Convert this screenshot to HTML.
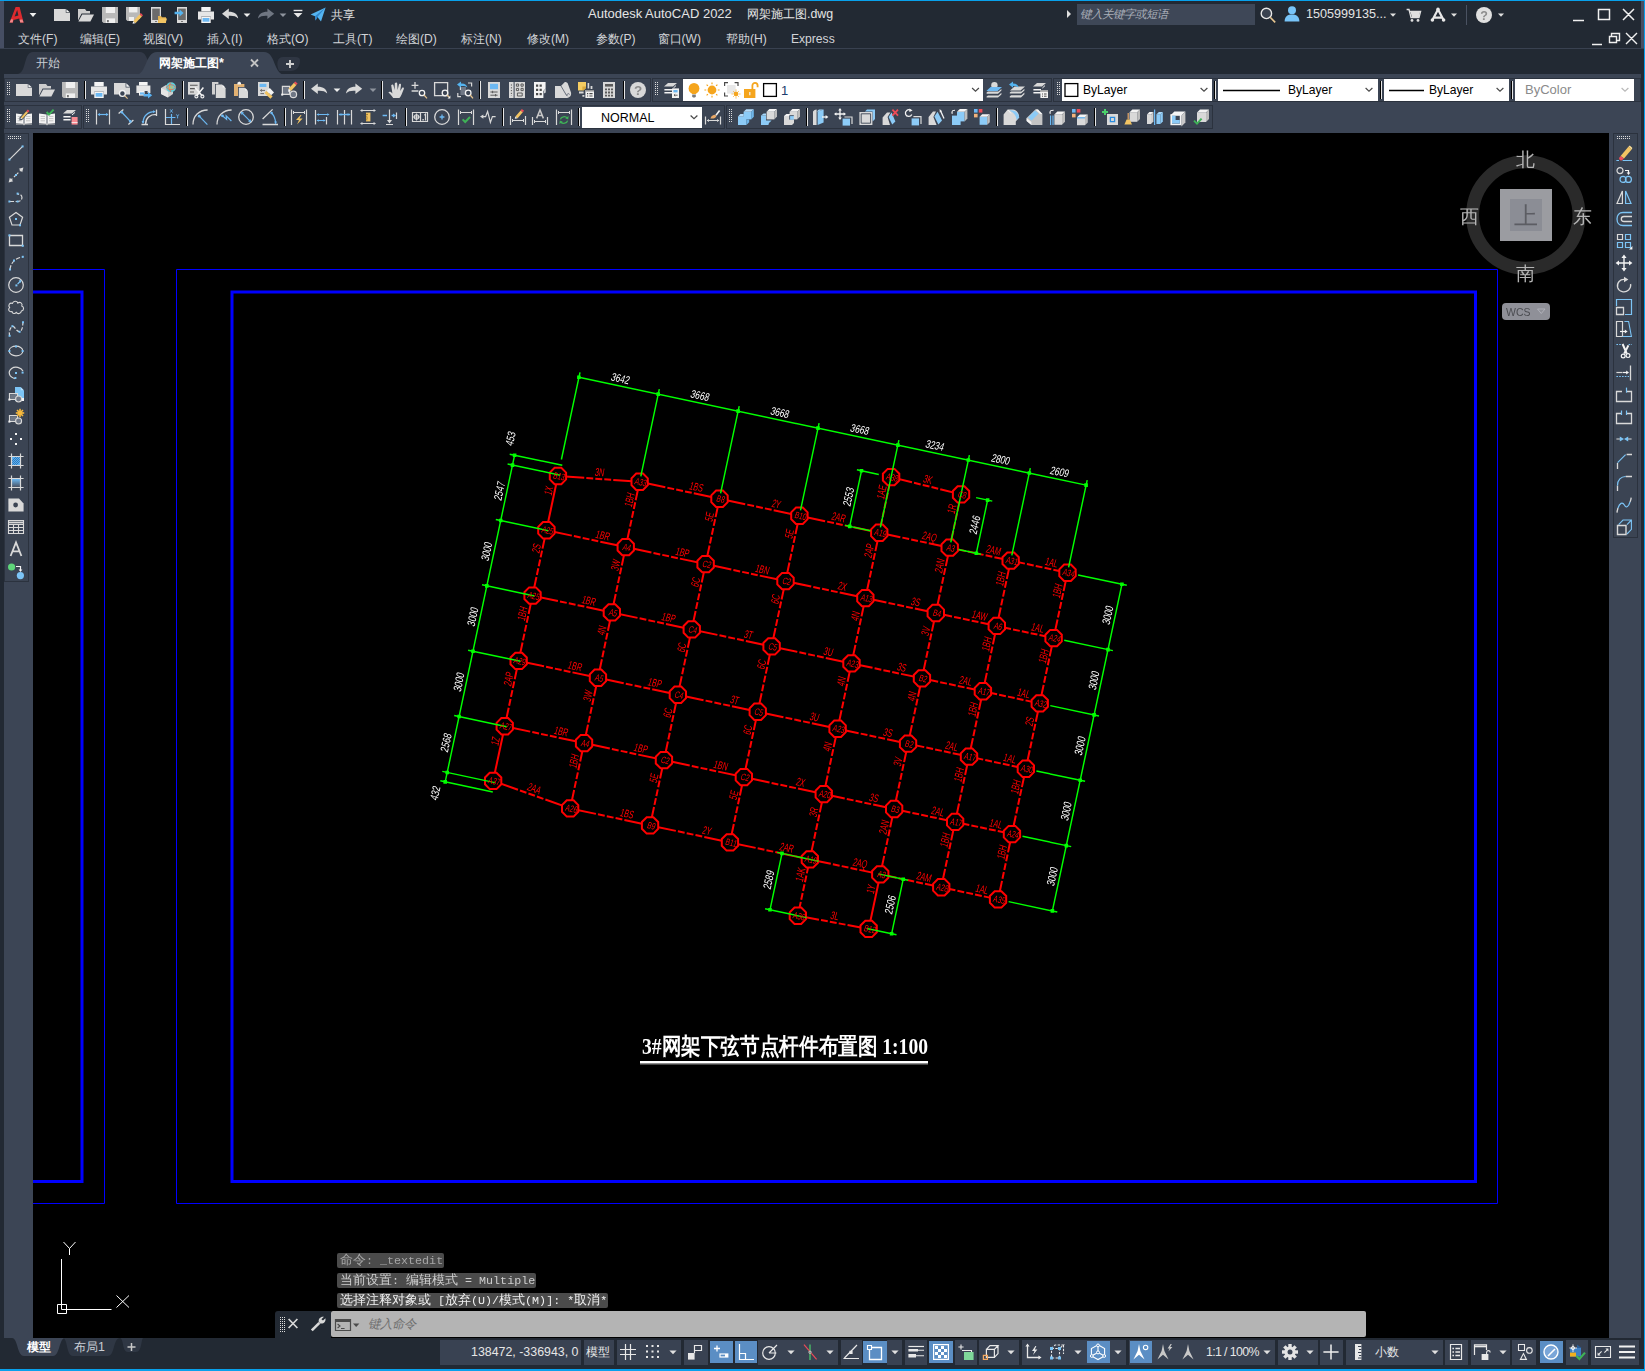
<!DOCTYPE html>
<html><head><meta charset="utf-8"><title>Autodesk AutoCAD 2022</title><style>
*{box-sizing:border-box}
html,body{margin:0;padding:0}
body{width:1645px;height:1371px;overflow:hidden;background:#222933;font-family:"Liberation Sans",sans-serif;font-size:12px;color:#d6d6d6;position:relative}
.a{position:absolute}
.t{position:absolute;white-space:nowrap;line-height:16px}
.pn{position:absolute;background:#3b4453;border:1px solid #2b323e}
.dd{position:absolute;background:#fff;color:#000;font-size:13px;line-height:21px;white-space:nowrap}
.sc{position:absolute;top:1340px;height:25px;background:#394252}
.on{position:absolute;top:1341px;height:22px;background:#5b8ec4}
.ch{position:absolute;left:337px;height:15px;background:#4b4b4b;border-radius:2px;font-family:"Liberation Mono",monospace;font-size:11.7px;line-height:15px;overflow:hidden;padding-left:3px;white-space:pre}
svg{position:absolute;overflow:visible}
</style></head><body>
<div class="a" style="left:0;top:0;width:1645px;height:1px;background:#08a1ec"></div>
<div class="a" style="left:0;top:1px;width:4px;height:47px;background:#464e63"></div>
<div class="a" style="left:1641px;top:1px;width:3px;height:47px;background:#464e63"></div>
<div class="a" style="left:0;top:48px;width:1645px;height:1px;background:#394150"></div>
<div class="a" style="left:4px;top:74px;width:1637px;height:59px;background:#3c4555"></div>
<div class="a" style="left:4px;top:133px;width:29px;height:1205px;background:#3c4555"></div>
<div class="a" style="left:1609px;top:133px;width:32px;height:1205px;background:#3c4555"></div>
<div class="a" style="left:1644px;top:0;width:1px;height:1371px;background:#08a1ec"></div>
<div class="a" style="left:0;top:1369px;width:1645px;height:2px;background:#08a1ec"></div>
<div class="a" style="left:33px;top:133px;width:1576px;height:1205px;background:#000"></div>
<div class="t" style="left:588px;top:6px;font-size:13px;color:#e4e4e4">Autodesk AutoCAD 2022</div>
<div class="t" style="left:747px;top:6px;font-size:12.4px;color:#e4e4e4">网架施工图.dwg</div>
<div class="t" style="left:331px;top:7px;font-size:12px;color:#e0e0e0">共享</div>
<div class="a" style="left:1077px;top:4px;width:178px;height:21px;background:#3e4757"></div>
<div class="t" style="left:1080px;top:6px;font-size:11.5px;font-style:italic;color:#a9aeb8;letter-spacing:-1px">键入关键字或短语</div>
<div class="t" style="left:1306px;top:6px;font-size:12.6px;color:#e4e4e4">1505999135...</div>
<div class="t" style="left:18px;top:31px;font-size:12.1px;color:#d2d4d8">文件(F)</div>
<div class="t" style="left:80px;top:31px;font-size:12.1px;color:#d2d4d8">编辑(E)</div>
<div class="t" style="left:143px;top:31px;font-size:12.1px;color:#d2d4d8">视图(V)</div>
<div class="t" style="left:207px;top:31px;font-size:12.1px;color:#d2d4d8">插入(I)</div>
<div class="t" style="left:267px;top:31px;font-size:12.1px;color:#d2d4d8">格式(O)</div>
<div class="t" style="left:333px;top:31px;font-size:12.1px;color:#d2d4d8">工具(T)</div>
<div class="t" style="left:396px;top:31px;font-size:12.1px;color:#d2d4d8">绘图(D)</div>
<div class="t" style="left:461px;top:31px;font-size:12.1px;color:#d2d4d8">标注(N)</div>
<div class="t" style="left:527px;top:31px;font-size:12.1px;color:#d2d4d8">修改(M)</div>
<div class="t" style="left:595.5px;top:31px;font-size:12.1px;color:#d2d4d8">参数(P)</div>
<div class="t" style="left:657.5px;top:31px;font-size:12.1px;color:#d2d4d8">窗口(W)</div>
<div class="t" style="left:726px;top:31px;font-size:12.1px;color:#d2d4d8">帮助(H)</div>
<div class="t" style="left:791px;top:31px;font-size:12.1px;color:#d2d4d8">Express</div>
<svg style="left:0;top:49px" width="320" height="26" viewBox="0 49 320 26"><path d="M17 74 C27 74 23 52 33 52 H140 C150 52 147 74 158 74Z" fill="#323947"/><path d="M279 71 C276 64 277 57 283 57 H294 C299 57 300 58 300 61 C300 67 296 71 291 71Z" fill="#2f3643"/><path d="M136 75 C147 74 145 52 157 52 H264 C276 52 273 74 285 75Z" fill="#3c4555"/><path d="M254.5 63 m-3.5 -3.5 l7 7 m0 -7 l-7 7" stroke="#c4c4c4" stroke-width="1.9" fill="none"/><path d="M286 64 h8 M290 60 v8" stroke="#d0d0d0" stroke-width="1.9" fill="none"/></svg>
<div class="t" style="left:36px;top:55px;font-size:12.4px;color:#c9cdd4">开始</div>
<div class="t" style="left:159px;top:55px;font-size:12.4px;font-weight:bold;color:#fff">网架施工图*</div>
<div class="pn" style="left:4px;top:78px;width:647px;height:24px"></div>
<div class="pn" style="left:652px;top:78px;width:400px;height:24px"></div>
<div class="pn" style="left:1053px;top:78px;width:588px;height:24px"></div>
<div class="pn" style="left:4px;top:105px;width:78px;height:24px"></div>
<div class="pn" style="left:83px;top:105px;width:642px;height:24px"></div>
<div class="pn" style="left:726px;top:105px;width:487px;height:24px"></div>
<div class="pn" style="left:4px;top:133px;width:25px;height:449px"></div>
<div class="pn" style="left:1613px;top:133px;width:25px;height:405px"></div>
<svg style="left:0;top:0" width="1645" height="1371"><path d="M7 82h1v1h-1zM9 82h1v1h-1zM7 84h1v1h-1zM9 84h1v1h-1zM7 86h1v1h-1zM9 86h1v1h-1zM7 88h1v1h-1zM9 88h1v1h-1zM7 90h1v1h-1zM9 90h1v1h-1zM7 92h1v1h-1zM9 92h1v1h-1zM7 94h1v1h-1zM9 94h1v1h-1zM655 82h1v1h-1zM657 82h1v1h-1zM655 84h1v1h-1zM657 84h1v1h-1zM655 86h1v1h-1zM657 86h1v1h-1zM655 88h1v1h-1zM657 88h1v1h-1zM655 90h1v1h-1zM657 90h1v1h-1zM655 92h1v1h-1zM657 92h1v1h-1zM655 94h1v1h-1zM657 94h1v1h-1zM1057 82h1v1h-1zM1059 82h1v1h-1zM1057 84h1v1h-1zM1059 84h1v1h-1zM1057 86h1v1h-1zM1059 86h1v1h-1zM1057 88h1v1h-1zM1059 88h1v1h-1zM1057 90h1v1h-1zM1059 90h1v1h-1zM1057 92h1v1h-1zM1059 92h1v1h-1zM1057 94h1v1h-1zM1059 94h1v1h-1zM7 109h1v1h-1zM9 109h1v1h-1zM7 111h1v1h-1zM9 111h1v1h-1zM7 113h1v1h-1zM9 113h1v1h-1zM7 115h1v1h-1zM9 115h1v1h-1zM7 117h1v1h-1zM9 117h1v1h-1zM7 119h1v1h-1zM9 119h1v1h-1zM7 121h1v1h-1zM9 121h1v1h-1zM86 109h1v1h-1zM88 109h1v1h-1zM86 111h1v1h-1zM88 111h1v1h-1zM86 113h1v1h-1zM88 113h1v1h-1zM86 115h1v1h-1zM88 115h1v1h-1zM86 117h1v1h-1zM88 117h1v1h-1zM86 119h1v1h-1zM88 119h1v1h-1zM86 121h1v1h-1zM88 121h1v1h-1zM729 109h1v1h-1zM731 109h1v1h-1zM729 111h1v1h-1zM731 111h1v1h-1zM729 113h1v1h-1zM731 113h1v1h-1zM729 115h1v1h-1zM731 115h1v1h-1zM729 117h1v1h-1zM731 117h1v1h-1zM729 119h1v1h-1zM731 119h1v1h-1zM729 121h1v1h-1zM731 121h1v1h-1zM8 136h1v1h-1zM8 138h1v1h-1zM10 136h1v1h-1zM10 138h1v1h-1zM12 136h1v1h-1zM12 138h1v1h-1zM14 136h1v1h-1zM14 138h1v1h-1zM16 136h1v1h-1zM16 138h1v1h-1zM18 136h1v1h-1zM18 138h1v1h-1zM20 136h1v1h-1zM20 138h1v1h-1zM1617 136h1v1h-1zM1617 138h1v1h-1zM1619 136h1v1h-1zM1619 138h1v1h-1zM1621 136h1v1h-1zM1621 138h1v1h-1zM1623 136h1v1h-1zM1623 138h1v1h-1zM1625 136h1v1h-1zM1625 138h1v1h-1zM1627 136h1v1h-1zM1627 138h1v1h-1zM1629 136h1v1h-1zM1629 138h1v1h-1zM280 1317h1v1h-1zM282 1317h1v1h-1zM284 1317h1v1h-1zM280 1319h1v1h-1zM282 1319h1v1h-1zM284 1319h1v1h-1zM280 1321h1v1h-1zM282 1321h1v1h-1zM284 1321h1v1h-1zM280 1323h1v1h-1zM282 1323h1v1h-1zM284 1323h1v1h-1zM280 1325h1v1h-1zM282 1325h1v1h-1zM284 1325h1v1h-1zM280 1327h1v1h-1zM282 1327h1v1h-1zM284 1327h1v1h-1zM280 1329h1v1h-1zM282 1329h1v1h-1zM284 1329h1v1h-1zM280 1331h1v1h-1zM282 1331h1v1h-1zM284 1331h1v1h-1z" fill="#dcdcdc"/></svg>
<div class="dd" style="left:683px;top:79px;width:300px;height:22px"><span style="position:absolute;left:98px;top:1px;color:#1c3c6e">1</span></div>
<div class="dd" style="left:1062px;top:79px;width:150px;height:22px"><span style="position:absolute;left:21px;top:1px;font-size:12.1px">ByLayer</span></div>
<div class="dd" style="left:1218px;top:79px;width:160px;height:22px"><span style="position:absolute;left:70px;top:1px;font-size:12.1px">ByLayer</span></div>
<div class="dd" style="left:1384px;top:79px;width:125px;height:22px"><span style="position:absolute;left:45px;top:1px;font-size:12.1px">ByLayer</span></div>
<div class="dd" style="left:1515px;top:79px;width:119px;height:22px;color:#8a8a8a"><span style="position:absolute;left:10px;top:0px">ByColor</span></div>
<div class="dd" style="left:582px;top:107px;width:120px;height:21px"><span style="position:absolute;left:19px;top:1px;font-size:12.5px">NORMAL</span></div>
<div class="a" style="left:1214px;top:81px;width:1px;height:18px;background:#000"></div><div class="a" style="left:1215px;top:81px;width:1px;height:18px;background:#e6e6e6"></div>
<div class="a" style="left:1380px;top:81px;width:1px;height:18px;background:#000"></div><div class="a" style="left:1381px;top:81px;width:1px;height:18px;background:#e6e6e6"></div>
<div class="a" style="left:1511px;top:81px;width:1px;height:18px;background:#000"></div><div class="a" style="left:1512px;top:81px;width:1px;height:18px;background:#e6e6e6"></div>
<svg style="left:33px;top:133px;overflow:hidden;will-change:transform" width="1576" height="1205" viewBox="33 133 1576 1205">
<g fill="none" stroke="#0000ff"><path d="M33 269.5 H104.5 V1203.5 H33 M176.5 269.5 H1497.5 V1203.5 H176.5Z" stroke-width="1"/><path d="M33 292 H82 V1181.5 H33 M232 292 H1475.5 V1181.5 H232Z" stroke-width="3"/></g>
<g stroke="#ff0000" stroke-width="2" fill="none">
<path d="M557.9 476 L639.6 481.8" stroke-dasharray="26.4 2.1 6.9 2.1 6.9 2.1 6.9 2.1 26.4"/>
<path d="M639.6 481.8 L719.5 498.7" stroke-dasharray="26.3 2.1 6.9 2.1 6.9 2.1 6.9 2.1 26.3"/>
<path d="M719.5 498.7 L799.4 515.7" stroke-dasharray="26.3 2.1 6.9 2.1 6.9 2.1 6.9 2.1 26.3"/>
<path d="M799.4 515.7 L879.3 532.7" stroke-dasharray="26.3 2.1 6.9 2.1 6.9 2.1 6.9 2.1 26.3"/>
<path d="M879.3 532.7 L949.7 547.7" stroke-dasharray="21.5 2.1 6.9 2.1 6.9 2.1 6.9 2.1 21.5"/>
<path d="M949.7 547.7 L1010.7 560.6" stroke-dasharray="16.6 2.1 6.9 2.1 6.9 2.1 6.9 2.1 16.6"/>
<path d="M1010.7 560.6 L1067.5 572.7" stroke-dasharray="14.5 2.1 6.9 2.1 6.9 2.1 6.9 2.1 14.5"/>
<path d="M546.4 530.2 L625.7 547.1" stroke-dasharray="26 2.1 6.9 2.1 6.9 2.1 6.9 2.1 26"/>
<path d="M625.7 547.1 L705.6 564.1" stroke-dasharray="26.3 2.1 6.9 2.1 6.9 2.1 6.9 2.1 26.3"/>
<path d="M705.6 564.1 L785.5 581.1" stroke-dasharray="26.3 2.1 6.9 2.1 6.9 2.1 6.9 2.1 26.3"/>
<path d="M785.5 581.1 L865.4 598" stroke-dasharray="26.3 2.1 6.9 2.1 6.9 2.1 6.9 2.1 26.3"/>
<path d="M865.4 598 L935.8 613" stroke-dasharray="21.5 2.1 6.9 2.1 6.9 2.1 6.9 2.1 21.5"/>
<path d="M935.8 613 L996.8 626" stroke-dasharray="16.6 2.1 6.9 2.1 6.9 2.1 6.9 2.1 16.6"/>
<path d="M996.8 626 L1053.6 638" stroke-dasharray="14.5 2.1 6.9 2.1 6.9 2.1 6.9 2.1 14.5"/>
<path d="M532.5 595.6 L611.8 612.4" stroke-dasharray="26 2.1 6.9 2.1 6.9 2.1 6.9 2.1 26"/>
<path d="M611.8 612.4 L691.7 629.4" stroke-dasharray="26.3 2.1 6.9 2.1 6.9 2.1 6.9 2.1 26.3"/>
<path d="M691.7 629.4 L771.6 646.4" stroke-dasharray="26.3 2.1 6.9 2.1 6.9 2.1 6.9 2.1 26.3"/>
<path d="M771.6 646.4 L851.5 663.4" stroke-dasharray="26.3 2.1 6.9 2.1 6.9 2.1 6.9 2.1 26.3"/>
<path d="M851.5 663.4 L921.9 678.3" stroke-dasharray="21.5 2.1 6.9 2.1 6.9 2.1 6.9 2.1 21.5"/>
<path d="M921.9 678.3 L982.9 691.3" stroke-dasharray="16.6 2.1 6.9 2.1 6.9 2.1 6.9 2.1 16.6"/>
<path d="M982.9 691.3 L1039.7 703.4" stroke-dasharray="14.5 2.1 6.9 2.1 6.9 2.1 6.9 2.1 14.5"/>
<path d="M518.6 660.9 L598 677.8" stroke-dasharray="26 2.1 6.9 2.1 6.9 2.1 6.9 2.1 26"/>
<path d="M598 677.8 L677.8 694.7" stroke-dasharray="26.3 2.1 6.9 2.1 6.9 2.1 6.9 2.1 26.3"/>
<path d="M677.8 694.7 L757.7 711.7" stroke-dasharray="26.3 2.1 6.9 2.1 6.9 2.1 6.9 2.1 26.3"/>
<path d="M757.7 711.7 L837.6 728.7" stroke-dasharray="26.3 2.1 6.9 2.1 6.9 2.1 6.9 2.1 26.3"/>
<path d="M837.6 728.7 L908 743.7" stroke-dasharray="21.5 2.1 6.9 2.1 6.9 2.1 6.9 2.1 21.5"/>
<path d="M908 743.7 L969 756.6" stroke-dasharray="16.6 2.1 6.9 2.1 6.9 2.1 6.9 2.1 16.6"/>
<path d="M969 756.6 L1025.8 768.7" stroke-dasharray="14.5 2.1 6.9 2.1 6.9 2.1 6.9 2.1 14.5"/>
<path d="M504.8 726.2 L584.1 743.1" stroke-dasharray="26 2.1 6.9 2.1 6.9 2.1 6.9 2.1 26"/>
<path d="M584.1 743.1 L664 760.1" stroke-dasharray="26.3 2.1 6.9 2.1 6.9 2.1 6.9 2.1 26.3"/>
<path d="M664 760.1 L743.8 777.1" stroke-dasharray="26.3 2.1 6.9 2.1 6.9 2.1 6.9 2.1 26.3"/>
<path d="M743.8 777.1 L823.7 794" stroke-dasharray="26.3 2.1 6.9 2.1 6.9 2.1 6.9 2.1 26.3"/>
<path d="M823.7 794 L894.1 809" stroke-dasharray="21.5 2.1 6.9 2.1 6.9 2.1 6.9 2.1 21.5"/>
<path d="M894.1 809 L955.1 822" stroke-dasharray="16.6 2.1 6.9 2.1 6.9 2.1 6.9 2.1 16.6"/>
<path d="M955.1 822 L1011.9 834" stroke-dasharray="14.5 2.1 6.9 2.1 6.9 2.1 6.9 2.1 14.5"/>
<path d="M493.1 780.9 L570.2 808.4" stroke-dasharray="26.4 2.1 6.9 2.1 6.9 2.1 6.9 2.1 26.4"/>
<path d="M570.2 808.4 L650.1 825.4" stroke-dasharray="26.3 2.1 6.9 2.1 6.9 2.1 6.9 2.1 26.3"/>
<path d="M650.1 825.4 L729.9 842.4" stroke-dasharray="26.3 2.1 6.9 2.1 6.9 2.1 6.9 2.1 26.3"/>
<path d="M729.9 842.4 L809.8 859.4" stroke-dasharray="26.3 2.1 6.9 2.1 6.9 2.1 6.9 2.1 26.3"/>
<path d="M809.8 859.4 L880.3 874.3" stroke-dasharray="21.5 2.1 6.9 2.1 6.9 2.1 6.9 2.1 21.5"/>
<path d="M880.3 874.3 L941.2 887.3" stroke-dasharray="16.6 2.1 6.9 2.1 6.9 2.1 6.9 2.1 16.6"/>
<path d="M941.2 887.3 L998.1 899.4" stroke-dasharray="14.5 2.1 6.9 2.1 6.9 2.1 6.9 2.1 14.5"/>
<path d="M557.9 476 L546.4 530.2"/>
<path d="M546.4 530.2 L532.5 595.6" stroke-dasharray="18.8 2.1 6.9 2.1 6.9 2.1 6.9 2.1 18.8"/>
<path d="M532.5 595.6 L518.6 660.9" stroke-dasharray="18.8 2.1 6.9 2.1 6.9 2.1 6.9 2.1 18.8"/>
<path d="M518.6 660.9 L504.8 726.2" stroke-dasharray="18.8 2.1 6.9 2.1 6.9 2.1 6.9 2.1 18.8"/>
<path d="M504.8 726.2 L493.1 780.9"/>
<path d="M639.6 481.8 L625.7 547.1" stroke-dasharray="18.8 2.1 6.9 2.1 6.9 2.1 6.9 2.1 18.8"/>
<path d="M625.7 547.1 L611.8 612.4" stroke-dasharray="18.8 2.1 6.9 2.1 6.9 2.1 6.9 2.1 18.8"/>
<path d="M611.8 612.4 L598 677.8" stroke-dasharray="18.8 2.1 6.9 2.1 6.9 2.1 6.9 2.1 18.8"/>
<path d="M598 677.8 L584.1 743.1" stroke-dasharray="18.8 2.1 6.9 2.1 6.9 2.1 6.9 2.1 18.8"/>
<path d="M584.1 743.1 L570.2 808.4" stroke-dasharray="18.8 2.1 6.9 2.1 6.9 2.1 6.9 2.1 18.8"/>
<path d="M719.5 498.7 L705.6 564.1" stroke-dasharray="18.8 2.1 6.9 2.1 6.9 2.1 6.9 2.1 18.8"/>
<path d="M705.6 564.1 L691.7 629.4" stroke-dasharray="18.8 2.1 6.9 2.1 6.9 2.1 6.9 2.1 18.8"/>
<path d="M691.7 629.4 L677.8 694.7" stroke-dasharray="18.8 2.1 6.9 2.1 6.9 2.1 6.9 2.1 18.8"/>
<path d="M677.8 694.7 L664 760.1" stroke-dasharray="18.8 2.1 6.9 2.1 6.9 2.1 6.9 2.1 18.8"/>
<path d="M664 760.1 L650.1 825.4" stroke-dasharray="18.8 2.1 6.9 2.1 6.9 2.1 6.9 2.1 18.8"/>
<path d="M799.4 515.7 L785.5 581.1" stroke-dasharray="18.8 2.1 6.9 2.1 6.9 2.1 6.9 2.1 18.8"/>
<path d="M785.5 581.1 L771.6 646.4" stroke-dasharray="18.8 2.1 6.9 2.1 6.9 2.1 6.9 2.1 18.8"/>
<path d="M771.6 646.4 L757.7 711.7" stroke-dasharray="18.8 2.1 6.9 2.1 6.9 2.1 6.9 2.1 18.8"/>
<path d="M757.7 711.7 L743.8 777.1" stroke-dasharray="18.8 2.1 6.9 2.1 6.9 2.1 6.9 2.1 18.8"/>
<path d="M743.8 777.1 L729.9 842.4" stroke-dasharray="18.8 2.1 6.9 2.1 6.9 2.1 6.9 2.1 18.8"/>
<path d="M879.3 532.7 L865.4 598" stroke-dasharray="18.8 2.1 6.9 2.1 6.9 2.1 6.9 2.1 18.8"/>
<path d="M865.4 598 L851.5 663.4" stroke-dasharray="18.8 2.1 6.9 2.1 6.9 2.1 6.9 2.1 18.8"/>
<path d="M851.5 663.4 L837.6 728.7" stroke-dasharray="18.8 2.1 6.9 2.1 6.9 2.1 6.9 2.1 18.8"/>
<path d="M837.6 728.7 L823.7 794" stroke-dasharray="18.8 2.1 6.9 2.1 6.9 2.1 6.9 2.1 18.8"/>
<path d="M823.7 794 L809.8 859.4" stroke-dasharray="18.8 2.1 6.9 2.1 6.9 2.1 6.9 2.1 18.8"/>
<path d="M949.7 547.7 L935.8 613" stroke-dasharray="18.8 2.1 6.9 2.1 6.9 2.1 6.9 2.1 18.8"/>
<path d="M935.8 613 L921.9 678.3" stroke-dasharray="18.8 2.1 6.9 2.1 6.9 2.1 6.9 2.1 18.8"/>
<path d="M921.9 678.3 L908 743.7" stroke-dasharray="18.8 2.1 6.9 2.1 6.9 2.1 6.9 2.1 18.8"/>
<path d="M908 743.7 L894.1 809" stroke-dasharray="18.8 2.1 6.9 2.1 6.9 2.1 6.9 2.1 18.8"/>
<path d="M894.1 809 L880.3 874.3" stroke-dasharray="18.8 2.1 6.9 2.1 6.9 2.1 6.9 2.1 18.8"/>
<path d="M1010.7 560.6 L996.8 626" stroke-dasharray="18.8 2.1 6.9 2.1 6.9 2.1 6.9 2.1 18.8"/>
<path d="M996.8 626 L982.9 691.3" stroke-dasharray="18.8 2.1 6.9 2.1 6.9 2.1 6.9 2.1 18.8"/>
<path d="M982.9 691.3 L969 756.6" stroke-dasharray="18.8 2.1 6.9 2.1 6.9 2.1 6.9 2.1 18.8"/>
<path d="M969 756.6 L955.1 822" stroke-dasharray="18.8 2.1 6.9 2.1 6.9 2.1 6.9 2.1 18.8"/>
<path d="M955.1 822 L941.2 887.3" stroke-dasharray="18.8 2.1 6.9 2.1 6.9 2.1 6.9 2.1 18.8"/>
<path d="M1067.5 572.7 L1053.6 638" stroke-dasharray="18.8 2.1 6.9 2.1 6.9 2.1 6.9 2.1 18.8"/>
<path d="M1053.6 638 L1039.7 703.4" stroke-dasharray="18.8 2.1 6.9 2.1 6.9 2.1 6.9 2.1 18.8"/>
<path d="M1039.7 703.4 L1025.8 768.7" stroke-dasharray="18.8 2.1 6.9 2.1 6.9 2.1 6.9 2.1 18.8"/>
<path d="M1025.8 768.7 L1011.9 834" stroke-dasharray="18.8 2.1 6.9 2.1 6.9 2.1 6.9 2.1 18.8"/>
<path d="M1011.9 834 L998.1 899.4" stroke-dasharray="18.8 2.1 6.9 2.1 6.9 2.1 6.9 2.1 18.8"/>
<path d="M891.1 477.1 L961 494.4" stroke-dasharray="21.5 2.1 6.9 2.1 6.9 2.1 6.9 2.1 21.5"/>
<path d="M891.1 477.1 L879.3 532.7" stroke-dasharray="13.9 2.1 6.9 2.1 6.9 2.1 6.9 2.1 13.9"/>
<path d="M961 494.4 L949.7 547.7" stroke-dasharray="17.2 2.1 6.9 2.1 6.9 2.1 17.2"/>
<path d="M797.8 915.8 L868.7 928.9" stroke-dasharray="21.5 2.1 6.9 2.1 6.9 2.1 6.9 2.1 21.5"/>
<path d="M809.8 859.4 L797.8 915.8" stroke-dasharray="14.3 2.1 6.9 2.1 6.9 2.1 6.9 2.1 14.3"/>
<path d="M880.3 874.3 L868.7 928.9"/>
</g>
<g stroke="#ff0000" stroke-width="2" fill="#000"><polygon points="566.1,479.4 561.3,484.2 554.6,484.2 549.8,479.4 549.8,472.6 554.6,467.8 561.3,467.8 566.1,472.6"/><polygon points="647.8,485.1 643,489.9 636.2,489.9 631.5,485.1 631.5,478.4 636.2,473.6 643,473.6 647.8,478.4"/><polygon points="727.7,502.1 722.9,506.9 716.1,506.9 711.3,502.1 711.3,495.4 716.1,490.6 722.9,490.6 727.7,495.4"/><polygon points="807.6,519.1 802.8,523.9 796,523.9 791.2,519.1 791.2,512.3 796,507.6 802.8,507.6 807.6,512.3"/><polygon points="887.4,536.1 882.7,540.9 875.9,540.9 871.1,536.1 871.1,529.3 875.9,524.5 882.7,524.5 887.4,529.3"/><polygon points="957.9,551.1 953.1,555.8 946.3,555.8 941.5,551.1 941.5,544.3 946.3,539.5 953.1,539.5 957.9,544.3"/><polygon points="1018.8,564 1014.1,568.8 1007.3,568.8 1002.5,564 1002.5,557.2 1007.3,552.5 1014.1,552.5 1018.8,557.2"/><polygon points="1075.7,576.1 1070.9,580.9 1064.1,580.9 1059.3,576.1 1059.3,569.3 1064.1,564.5 1070.9,564.5 1075.7,569.3"/><polygon points="554.6,533.6 549.8,538.4 543,538.4 538.2,533.6 538.2,526.9 543,522.1 549.8,522.1 554.6,526.9"/><polygon points="633.9,550.5 629.1,555.3 622.3,555.3 617.6,550.5 617.6,543.7 622.3,538.9 629.1,538.9 633.9,543.7"/><polygon points="713.8,567.5 709,572.2 702.2,572.2 697.4,567.5 697.4,560.7 702.2,555.9 709,555.9 713.8,560.7"/><polygon points="793.7,584.4 788.9,589.2 782.1,589.2 777.3,584.4 777.3,577.7 782.1,572.9 788.9,572.9 793.7,577.7"/><polygon points="873.5,601.4 868.8,606.2 862,606.2 857.2,601.4 857.2,594.7 862,589.9 868.8,589.9 873.5,594.7"/><polygon points="944,616.4 939.2,621.2 932.4,621.2 927.6,616.4 927.6,609.6 932.4,604.8 939.2,604.8 944,609.6"/><polygon points="1005,629.3 1000.2,634.1 993.4,634.1 988.6,629.3 988.6,622.6 993.4,617.8 1000.2,617.8 1005,622.6"/><polygon points="1061.8,641.4 1057,646.2 1050.2,646.2 1045.4,641.4 1045.4,634.7 1050.2,629.9 1057,629.9 1061.8,634.7"/><polygon points="540.7,599 535.9,603.7 529.1,603.7 524.4,599 524.4,592.2 529.1,587.4 535.9,587.4 540.7,592.2"/><polygon points="620,615.8 615.2,620.6 608.5,620.6 603.7,615.8 603.7,609 608.5,604.3 615.2,604.3 620,609"/><polygon points="699.9,632.8 695.1,637.6 688.3,637.6 683.6,632.8 683.6,626 688.3,621.2 695.1,621.2 699.9,626"/><polygon points="779.8,649.8 775,654.6 768.2,654.6 763.4,649.8 763.4,643 768.2,638.2 775,638.2 779.8,643"/><polygon points="859.7,666.8 854.9,671.5 848.1,671.5 843.3,666.8 843.3,660 848.1,655.2 854.9,655.2 859.7,660"/><polygon points="930.1,681.7 925.3,686.5 918.5,686.5 913.8,681.7 913.8,675 918.5,670.2 925.3,670.2 930.1,675"/><polygon points="991.1,694.7 986.3,699.5 979.5,699.5 974.7,694.7 974.7,687.9 979.5,683.1 986.3,683.1 991.1,687.9"/><polygon points="1047.9,706.8 1043.1,711.5 1036.3,711.5 1031.6,706.8 1031.6,700 1036.3,695.2 1043.1,695.2 1047.9,700"/><polygon points="526.8,664.3 522,669.1 515.3,669.1 510.5,664.3 510.5,657.5 515.3,652.7 522,652.7 526.8,657.5"/><polygon points="606.1,681.1 601.3,685.9 594.6,685.9 589.8,681.1 589.8,674.4 594.6,669.6 601.3,669.6 606.1,674.4"/><polygon points="686,698.1 681.2,702.9 674.5,702.9 669.7,698.1 669.7,691.4 674.5,686.6 681.2,686.6 686,691.4"/><polygon points="765.9,715.1 761.1,719.9 754.3,719.9 749.6,715.1 749.6,708.3 754.3,703.6 761.1,703.6 765.9,708.3"/><polygon points="845.8,732.1 841,736.9 834.2,736.9 829.4,732.1 829.4,725.3 834.2,720.5 841,720.5 845.8,725.3"/><polygon points="916.2,747.1 911.4,751.8 904.7,751.8 899.9,747.1 899.9,740.3 904.7,735.5 911.4,735.5 916.2,740.3"/><polygon points="977.2,760 972.4,764.8 965.6,764.8 960.8,760 960.8,753.3 965.6,748.5 972.4,748.5 977.2,753.3"/><polygon points="1034,772.1 1029.2,776.9 1022.5,776.9 1017.7,772.1 1017.7,765.3 1022.5,760.5 1029.2,760.5 1034,765.3"/><polygon points="512.9,729.6 508.1,734.4 501.4,734.4 496.6,729.6 496.6,722.9 501.4,718.1 508.1,718.1 512.9,722.9"/><polygon points="592.2,746.5 587.5,751.3 580.7,751.3 575.9,746.5 575.9,739.7 580.7,734.9 587.5,734.9 592.2,739.7"/><polygon points="672.1,763.5 667.3,768.2 660.6,768.2 655.8,763.5 655.8,756.7 660.6,751.9 667.3,751.9 672.1,756.7"/><polygon points="752,780.4 747.2,785.2 740.5,785.2 735.7,780.4 735.7,773.7 740.5,768.9 747.2,768.9 752,773.7"/><polygon points="831.9,797.4 827.1,802.2 820.3,802.2 815.6,797.4 815.6,790.7 820.3,785.9 827.1,785.9 831.9,790.7"/><polygon points="902.3,812.4 897.5,817.2 890.8,817.2 886,812.4 886,805.6 890.8,800.8 897.5,800.8 902.3,805.6"/><polygon points="963.3,825.4 958.5,830.1 951.7,830.1 947,825.4 947,818.6 951.7,813.8 958.5,813.8 963.3,818.6"/><polygon points="1020.1,837.4 1015.3,842.2 1008.6,842.2 1003.8,837.4 1003.8,830.7 1008.6,825.9 1015.3,825.9 1020.1,830.7"/><polygon points="501.3,784.3 496.5,789.1 489.7,789.1 485,784.3 485,777.5 489.7,772.7 496.5,772.7 501.3,777.5"/><polygon points="578.3,811.8 573.6,816.6 566.8,816.6 562,811.8 562,805.1 566.8,800.3 573.6,800.3 578.3,805.1"/><polygon points="658.2,828.8 653.4,833.6 646.7,833.6 641.9,828.8 641.9,822 646.7,817.2 653.4,817.2 658.2,822"/><polygon points="738.1,845.8 733.3,850.6 726.6,850.6 721.8,845.8 721.8,839 726.6,834.2 733.3,834.2 738.1,839"/><polygon points="818,862.8 813.2,867.5 806.4,867.5 801.7,862.8 801.7,856 806.4,851.2 813.2,851.2 818,856"/><polygon points="888.4,877.7 883.6,882.5 876.9,882.5 872.1,877.7 872.1,871 876.9,866.2 883.6,866.2 888.4,871"/><polygon points="949.4,890.7 944.6,895.5 937.9,895.5 933.1,890.7 933.1,883.9 937.9,879.1 944.6,879.1 949.4,883.9"/><polygon points="1006.2,902.8 1001.4,907.6 994.7,907.6 989.9,902.8 989.9,896 994.7,891.2 1001.4,891.2 1006.2,896"/><polygon points="899.3,480.5 894.5,485.3 887.7,485.3 882.9,480.5 882.9,473.7 887.7,468.9 894.5,468.9 899.3,473.7"/><polygon points="969.2,497.8 964.4,502.6 957.6,502.6 952.9,497.8 952.9,491 957.6,486.2 964.4,486.2 969.2,491"/><polygon points="806,919.1 801.2,923.9 794.5,923.9 789.7,919.1 789.7,912.4 794.5,907.6 801.2,907.6 806,912.4"/><polygon points="876.8,932.3 872,937.1 865.3,937.1 860.5,932.3 860.5,925.5 865.3,920.8 872,920.8 876.8,925.5"/></g>
<path d="M578.9 377.3 L1086.1 485.1 M580 372.4 L561.4 459.5 M659.3 389.2 L640.8 476.4 M739.2 406.2 L720.6 493.4 M819.1 423.2 L800.5 510.3 M898.9 440.2 L880.4 527.3 M969.4 455.1 L950.8 542.3 M1030.3 468.1 L1011.8 555.3 M1087.2 480.2 L1068.6 567.3 M514.6 455.2 L445.2 781.9 M509.7 454.2 L562.3 465.3 M507.6 464 L560.2 475.2 M495.8 519.5 L548.4 530.7 M482 584.8 L534.5 596 M468.1 650.2 L520.6 661.3 M454.2 715.5 L506.7 726.7 M442.3 771.4 L494.8 782.6 M440.3 780.8 L492.8 792 M1121.9 584.3 L1052.4 910.9 M1078.1 575 L1126.8 585.3 M1064.2 640.3 L1112.9 650.6 M1050.3 705.6 L1099 716 M1036.4 771 L1085.1 781.3 M1022.5 836.3 L1071.2 846.6 M1008.6 901.6 L1057.3 912 M861.5 470.8 L849.7 526.4 M856.9 469.8 L878.8 474.5 M845 525.4 L870.5 530.8 M987.6 500.1 L976.3 553.3 M976.1 497.6 L992.3 501.1 M958.5 549.5 L981 554.3 M782 853.4 L770 909.8 M777.1 852.4 L818.6 861.2 M765.1 908.8 L806.6 917.6 M903.2 879.2 L891.6 933.8 M878.3 873.9 L908.1 880.3 M866.7 928.5 L896.5 934.8" stroke="#00ff00" stroke-width="1.45" fill="none"/>
<path d="M577.1 375.5 h3.6 v3.6 h-3.6z M656.4 392.3 h3.6 v3.6 h-3.6z M736.3 409.3 h3.6 v3.6 h-3.6z M816.2 426.3 h3.6 v3.6 h-3.6z M896.1 443.3 h3.6 v3.6 h-3.6z M966.5 458.2 h3.6 v3.6 h-3.6z M1027.5 471.2 h3.6 v3.6 h-3.6z M1084.3 483.3 h3.6 v3.6 h-3.6z M512.8 453.4 h3.6 v3.6 h-3.6z M510.7 463.3 h3.6 v3.6 h-3.6z M498.9 518.7 h3.6 v3.6 h-3.6z M485 584.1 h3.6 v3.6 h-3.6z M471.2 649.4 h3.6 v3.6 h-3.6z M457.3 714.7 h3.6 v3.6 h-3.6z M445.4 770.7 h3.6 v3.6 h-3.6z M443.4 780.1 h3.6 v3.6 h-3.6z M1120.1 582.5 h3.6 v3.6 h-3.6z M1106.2 647.8 h3.6 v3.6 h-3.6z M1092.3 713.1 h3.6 v3.6 h-3.6z M1078.4 778.5 h3.6 v3.6 h-3.6z M1064.5 843.8 h3.6 v3.6 h-3.6z M1050.6 909.1 h3.6 v3.6 h-3.6z M859.7 469 h3.6 v3.6 h-3.6z M847.9 524.6 h3.6 v3.6 h-3.6z M985.8 498.3 h3.6 v3.6 h-3.6z M974.5 551.5 h3.6 v3.6 h-3.6z M780.2 851.6 h3.6 v3.6 h-3.6z M768.2 908 h3.6 v3.6 h-3.6z M901.4 877.4 h3.6 v3.6 h-3.6z M889.8 932 h3.6 v3.6 h-3.6z" fill="#00ff00"/>
<g font-family="Liberation Sans, sans-serif"><text transform="translate(599 476.1) rotate(4) scale(0.64 1) skewX(-9)" text-anchor="middle" fill="#ff0000" font-size="11.3">3N</text><text transform="translate(695.3 490.7) rotate(12) scale(0.64 1) skewX(-9)" text-anchor="middle" fill="#ff0000" font-size="11.3">1BS</text><text transform="translate(775.2 507.7) rotate(12) scale(0.64 1) skewX(-9)" text-anchor="middle" fill="#ff0000" font-size="11.3">2Y</text><text transform="translate(837.5 521) rotate(12) scale(0.64 1) skewX(-9)" text-anchor="middle" fill="#ff0000" font-size="11.3">2AR</text><text transform="translate(928.4 540.3) rotate(12) scale(0.64 1) skewX(-9)" text-anchor="middle" fill="#ff0000" font-size="11.3">2AQ</text><text transform="translate(992.4 553.9) rotate(12) scale(0.64 1) skewX(-9)" text-anchor="middle" fill="#ff0000" font-size="11.3">2AM</text><text transform="translate(1050.5 566.2) rotate(12) scale(0.64 1) skewX(-9)" text-anchor="middle" fill="#ff0000" font-size="11.3">1AL</text><text transform="translate(601.7 539.1) rotate(12) scale(0.64 1) skewX(-9)" text-anchor="middle" fill="#ff0000" font-size="11.3">1BR</text><text transform="translate(681.4 556.1) rotate(12) scale(0.64 1) skewX(-9)" text-anchor="middle" fill="#ff0000" font-size="11.3">1BP</text><text transform="translate(761.3 573.1) rotate(12) scale(0.64 1) skewX(-9)" text-anchor="middle" fill="#ff0000" font-size="11.3">1BN</text><text transform="translate(841.2 590) rotate(12) scale(0.64 1) skewX(-9)" text-anchor="middle" fill="#ff0000" font-size="11.3">2X</text><text transform="translate(914.6 605.6) rotate(12) scale(0.64 1) skewX(-9)" text-anchor="middle" fill="#ff0000" font-size="11.3">3S</text><text transform="translate(978.5 619.2) rotate(12) scale(0.64 1) skewX(-9)" text-anchor="middle" fill="#ff0000" font-size="11.3">1AW</text><text transform="translate(1036.6 631.6) rotate(12) scale(0.64 1) skewX(-9)" text-anchor="middle" fill="#ff0000" font-size="11.3">1AL</text><text transform="translate(587.8 604.5) rotate(12) scale(0.64 1) skewX(-9)" text-anchor="middle" fill="#ff0000" font-size="11.3">1BR</text><text transform="translate(667.5 621.4) rotate(12) scale(0.64 1) skewX(-9)" text-anchor="middle" fill="#ff0000" font-size="11.3">1BP</text><text transform="translate(747.4 638.4) rotate(12) scale(0.64 1) skewX(-9)" text-anchor="middle" fill="#ff0000" font-size="11.3">3T</text><text transform="translate(827.3 655.4) rotate(12) scale(0.64 1) skewX(-9)" text-anchor="middle" fill="#ff0000" font-size="11.3">3U</text><text transform="translate(900.7 671) rotate(12) scale(0.64 1) skewX(-9)" text-anchor="middle" fill="#ff0000" font-size="11.3">3S</text><text transform="translate(964.6 684.5) rotate(12) scale(0.64 1) skewX(-9)" text-anchor="middle" fill="#ff0000" font-size="11.3">2AL</text><text transform="translate(1022.7 696.9) rotate(12) scale(0.64 1) skewX(-9)" text-anchor="middle" fill="#ff0000" font-size="11.3">1AL</text><text transform="translate(573.9 669.8) rotate(12) scale(0.64 1) skewX(-9)" text-anchor="middle" fill="#ff0000" font-size="11.3">1BR</text><text transform="translate(653.7 686.7) rotate(12) scale(0.64 1) skewX(-9)" text-anchor="middle" fill="#ff0000" font-size="11.3">1BP</text><text transform="translate(733.5 703.7) rotate(12) scale(0.64 1) skewX(-9)" text-anchor="middle" fill="#ff0000" font-size="11.3">3T</text><text transform="translate(813.4 720.7) rotate(12) scale(0.64 1) skewX(-9)" text-anchor="middle" fill="#ff0000" font-size="11.3">3U</text><text transform="translate(886.8 736.3) rotate(12) scale(0.64 1) skewX(-9)" text-anchor="middle" fill="#ff0000" font-size="11.3">3S</text><text transform="translate(950.7 749.9) rotate(12) scale(0.64 1) skewX(-9)" text-anchor="middle" fill="#ff0000" font-size="11.3">2AL</text><text transform="translate(1008.8 762.2) rotate(12) scale(0.64 1) skewX(-9)" text-anchor="middle" fill="#ff0000" font-size="11.3">1AL</text><text transform="translate(560.1 735.1) rotate(12) scale(0.64 1) skewX(-9)" text-anchor="middle" fill="#ff0000" font-size="11.3">1BR</text><text transform="translate(639.8 752.1) rotate(12) scale(0.64 1) skewX(-9)" text-anchor="middle" fill="#ff0000" font-size="11.3">1BP</text><text transform="translate(719.7 769.1) rotate(12) scale(0.64 1) skewX(-9)" text-anchor="middle" fill="#ff0000" font-size="11.3">1BN</text><text transform="translate(799.5 786) rotate(12) scale(0.64 1) skewX(-9)" text-anchor="middle" fill="#ff0000" font-size="11.3">2X</text><text transform="translate(872.9 801.6) rotate(12) scale(0.64 1) skewX(-9)" text-anchor="middle" fill="#ff0000" font-size="11.3">3S</text><text transform="translate(936.8 815.2) rotate(12) scale(0.64 1) skewX(-9)" text-anchor="middle" fill="#ff0000" font-size="11.3">2AL</text><text transform="translate(994.9 827.6) rotate(12) scale(0.64 1) skewX(-9)" text-anchor="middle" fill="#ff0000" font-size="11.3">1AL</text><text transform="translate(532.6 792) rotate(19.7) scale(0.64 1) skewX(-9)" text-anchor="middle" fill="#ff0000" font-size="11.3">2AA</text><text transform="translate(625.9 817.4) rotate(12) scale(0.64 1) skewX(-9)" text-anchor="middle" fill="#ff0000" font-size="11.3">1BS</text><text transform="translate(705.8 834.4) rotate(12) scale(0.64 1) skewX(-9)" text-anchor="middle" fill="#ff0000" font-size="11.3">2Y</text><text transform="translate(785.6 851.4) rotate(12) scale(0.64 1) skewX(-9)" text-anchor="middle" fill="#ff0000" font-size="11.3">2AR</text><text transform="translate(859 867) rotate(12) scale(0.64 1) skewX(-9)" text-anchor="middle" fill="#ff0000" font-size="11.3">2AQ</text><text transform="translate(922.9 880.6) rotate(12) scale(0.64 1) skewX(-9)" text-anchor="middle" fill="#ff0000" font-size="11.3">2AM</text><text transform="translate(981 892.9) rotate(12) scale(0.64 1) skewX(-9)" text-anchor="middle" fill="#ff0000" font-size="11.3">1AL</text><text transform="translate(552.3 491.8) rotate(282) scale(0.64 1) skewX(-9)" text-anchor="middle" fill="#ff0000" font-size="11.3">1X</text><text transform="translate(540.1 549.4) rotate(282) scale(0.64 1) skewX(-9)" text-anchor="middle" fill="#ff0000" font-size="11.3">2S</text><text transform="translate(526.2 614.7) rotate(282) scale(0.64 1) skewX(-9)" text-anchor="middle" fill="#ff0000" font-size="11.3">1BH</text><text transform="translate(512.3 680) rotate(282) scale(0.64 1) skewX(-9)" text-anchor="middle" fill="#ff0000" font-size="11.3">2AP</text><text transform="translate(499.1 742.2) rotate(282) scale(0.64 1) skewX(-9)" text-anchor="middle" fill="#ff0000" font-size="11.3">1Z</text><text transform="translate(633.3 500.9) rotate(282) scale(0.64 1) skewX(-9)" text-anchor="middle" fill="#ff0000" font-size="11.3">1BH</text><text transform="translate(619.4 566.2) rotate(282) scale(0.64 1) skewX(-9)" text-anchor="middle" fill="#ff0000" font-size="11.3">3W</text><text transform="translate(605.5 631.6) rotate(282) scale(0.64 1) skewX(-9)" text-anchor="middle" fill="#ff0000" font-size="11.3">4N</text><text transform="translate(591.6 696.9) rotate(282) scale(0.64 1) skewX(-9)" text-anchor="middle" fill="#ff0000" font-size="11.3">3W</text><text transform="translate(577.7 762.2) rotate(282) scale(0.64 1) skewX(-9)" text-anchor="middle" fill="#ff0000" font-size="11.3">1BH</text><text transform="translate(713.2 517.9) rotate(282) scale(0.64 1) skewX(-9)" text-anchor="middle" fill="#ff0000" font-size="11.3">5E</text><text transform="translate(699.3 583.2) rotate(282) scale(0.64 1) skewX(-9)" text-anchor="middle" fill="#ff0000" font-size="11.3">6C</text><text transform="translate(685.4 648.6) rotate(282) scale(0.64 1) skewX(-9)" text-anchor="middle" fill="#ff0000" font-size="11.3">6C</text><text transform="translate(671.5 713.9) rotate(282) scale(0.64 1) skewX(-9)" text-anchor="middle" fill="#ff0000" font-size="11.3">6C</text><text transform="translate(657.6 779.2) rotate(282) scale(0.64 1) skewX(-9)" text-anchor="middle" fill="#ff0000" font-size="11.3">5E</text><text transform="translate(793.1 534.9) rotate(282) scale(0.64 1) skewX(-9)" text-anchor="middle" fill="#ff0000" font-size="11.3">5E</text><text transform="translate(779.2 600.2) rotate(282) scale(0.64 1) skewX(-9)" text-anchor="middle" fill="#ff0000" font-size="11.3">6C</text><text transform="translate(765.3 665.5) rotate(282) scale(0.64 1) skewX(-9)" text-anchor="middle" fill="#ff0000" font-size="11.3">6C</text><text transform="translate(751.4 730.9) rotate(282) scale(0.64 1) skewX(-9)" text-anchor="middle" fill="#ff0000" font-size="11.3">6C</text><text transform="translate(737.5 796.2) rotate(282) scale(0.64 1) skewX(-9)" text-anchor="middle" fill="#ff0000" font-size="11.3">5E</text><text transform="translate(872.9 551.8) rotate(282) scale(0.64 1) skewX(-9)" text-anchor="middle" fill="#ff0000" font-size="11.3">2AP</text><text transform="translate(859.1 617.2) rotate(282) scale(0.64 1) skewX(-9)" text-anchor="middle" fill="#ff0000" font-size="11.3">4N</text><text transform="translate(845.2 682.5) rotate(282) scale(0.64 1) skewX(-9)" text-anchor="middle" fill="#ff0000" font-size="11.3">4N</text><text transform="translate(831.3 747.8) rotate(282) scale(0.64 1) skewX(-9)" text-anchor="middle" fill="#ff0000" font-size="11.3">4N</text><text transform="translate(817.4 813.2) rotate(282) scale(0.64 1) skewX(-9)" text-anchor="middle" fill="#ff0000" font-size="11.3">3R</text><text transform="translate(943.4 566.8) rotate(282) scale(0.64 1) skewX(-9)" text-anchor="middle" fill="#ff0000" font-size="11.3">2AN</text><text transform="translate(929.5 632.1) rotate(282) scale(0.64 1) skewX(-9)" text-anchor="middle" fill="#ff0000" font-size="11.3">3V</text><text transform="translate(915.6 697.5) rotate(282) scale(0.64 1) skewX(-9)" text-anchor="middle" fill="#ff0000" font-size="11.3">4N</text><text transform="translate(901.7 762.8) rotate(282) scale(0.64 1) skewX(-9)" text-anchor="middle" fill="#ff0000" font-size="11.3">3V</text><text transform="translate(887.8 828.2) rotate(282) scale(0.64 1) skewX(-9)" text-anchor="middle" fill="#ff0000" font-size="11.3">2AN</text><text transform="translate(1004.4 579.8) rotate(282) scale(0.64 1) skewX(-9)" text-anchor="middle" fill="#ff0000" font-size="11.3">1BH</text><text transform="translate(990.5 645.1) rotate(282) scale(0.64 1) skewX(-9)" text-anchor="middle" fill="#ff0000" font-size="11.3">1BH</text><text transform="translate(976.6 710.4) rotate(282) scale(0.64 1) skewX(-9)" text-anchor="middle" fill="#ff0000" font-size="11.3">1BH</text><text transform="translate(962.7 775.8) rotate(282) scale(0.64 1) skewX(-9)" text-anchor="middle" fill="#ff0000" font-size="11.3">1BH</text><text transform="translate(948.8 841.1) rotate(282) scale(0.64 1) skewX(-9)" text-anchor="middle" fill="#ff0000" font-size="11.3">1BH</text><text transform="translate(1061.2 591.9) rotate(282) scale(0.64 1) skewX(-9)" text-anchor="middle" fill="#ff0000" font-size="11.3">1BH</text><text transform="translate(1047.3 657.2) rotate(282) scale(0.64 1) skewX(-9)" text-anchor="middle" fill="#ff0000" font-size="11.3">1BH</text><text transform="translate(1033.4 722.5) rotate(282) scale(0.64 1) skewX(-9)" text-anchor="middle" fill="#ff0000" font-size="11.3">2S</text><text transform="translate(1019.5 787.9) rotate(282) scale(0.64 1) skewX(-9)" text-anchor="middle" fill="#ff0000" font-size="11.3">1BH</text><text transform="translate(1005.6 853.2) rotate(282) scale(0.64 1) skewX(-9)" text-anchor="middle" fill="#ff0000" font-size="11.3">1BH</text><text transform="translate(926.7 483) rotate(13.9) scale(0.64 1) skewX(-9)" text-anchor="middle" fill="#ff0000" font-size="11.3">3K</text><text transform="translate(885.4 493.3) rotate(282) scale(0.64 1) skewX(-9)" text-anchor="middle" fill="#ff0000" font-size="11.3">1AE</text><text transform="translate(955.5 509.9) rotate(282) scale(0.64 1) skewX(-9)" text-anchor="middle" fill="#ff0000" font-size="11.3">1R</text><text transform="translate(833.8 919.6) rotate(10.5) scale(0.64 1) skewX(-9)" text-anchor="middle" fill="#ff0000" font-size="11.3">3L</text><text transform="translate(804.1 875.8) rotate(282) scale(0.64 1) skewX(-9)" text-anchor="middle" fill="#ff0000" font-size="11.3">1AK</text><text transform="translate(874.6 890.3) rotate(282) scale(0.64 1) skewX(-9)" text-anchor="middle" fill="#ff0000" font-size="11.3">1Y</text><text transform="translate(558.2 479.4) rotate(12) scale(0.7 1) skewX(-9)" text-anchor="middle" fill="#ff0000" font-size="9.5">B13</text><text transform="translate(639.9 485.2) rotate(12) scale(0.7 1) skewX(-9)" text-anchor="middle" fill="#ff0000" font-size="9.5">A33</text><text transform="translate(719.8 502.1) rotate(12) scale(0.7 1) skewX(-9)" text-anchor="middle" fill="#ff0000" font-size="9.5">B8</text><text transform="translate(799.7 519.1) rotate(12) scale(0.7 1) skewX(-9)" text-anchor="middle" fill="#ff0000" font-size="9.5">B10</text><text transform="translate(879.6 536.1) rotate(12) scale(0.7 1) skewX(-9)" text-anchor="middle" fill="#ff0000" font-size="9.5">A19</text><text transform="translate(950 551.1) rotate(12) scale(0.7 1) skewX(-9)" text-anchor="middle" fill="#ff0000" font-size="9.5">A3</text><text transform="translate(1011 564) rotate(12) scale(0.7 1) skewX(-9)" text-anchor="middle" fill="#ff0000" font-size="9.5">A31</text><text transform="translate(1067.8 576.1) rotate(12) scale(0.7 1) skewX(-9)" text-anchor="middle" fill="#ff0000" font-size="9.5">A34</text><text transform="translate(546.7 533.6) rotate(12) scale(0.7 1) skewX(-9)" text-anchor="middle" fill="#ff0000" font-size="9.5">A25</text><text transform="translate(626 550.5) rotate(12) scale(0.7 1) skewX(-9)" text-anchor="middle" fill="#ff0000" font-size="9.5">A4</text><text transform="translate(705.9 567.5) rotate(12) scale(0.7 1) skewX(-9)" text-anchor="middle" fill="#ff0000" font-size="9.5">C2</text><text transform="translate(785.8 584.5) rotate(12) scale(0.7 1) skewX(-9)" text-anchor="middle" fill="#ff0000" font-size="9.5">C2</text><text transform="translate(865.7 601.4) rotate(12) scale(0.7 1) skewX(-9)" text-anchor="middle" fill="#ff0000" font-size="9.5">A13</text><text transform="translate(936.1 616.4) rotate(12) scale(0.7 1) skewX(-9)" text-anchor="middle" fill="#ff0000" font-size="9.5">B4</text><text transform="translate(997.1 629.4) rotate(12) scale(0.7 1) skewX(-9)" text-anchor="middle" fill="#ff0000" font-size="9.5">A6</text><text transform="translate(1053.9 641.4) rotate(12) scale(0.7 1) skewX(-9)" text-anchor="middle" fill="#ff0000" font-size="9.5">A24</text><text transform="translate(532.8 599) rotate(12) scale(0.7 1) skewX(-9)" text-anchor="middle" fill="#ff0000" font-size="9.5">A25</text><text transform="translate(612.1 615.8) rotate(12) scale(0.7 1) skewX(-9)" text-anchor="middle" fill="#ff0000" font-size="9.5">A5</text><text transform="translate(692 632.8) rotate(12) scale(0.7 1) skewX(-9)" text-anchor="middle" fill="#ff0000" font-size="9.5">C4</text><text transform="translate(771.9 649.8) rotate(12) scale(0.7 1) skewX(-9)" text-anchor="middle" fill="#ff0000" font-size="9.5">C5</text><text transform="translate(851.8 666.8) rotate(12) scale(0.7 1) skewX(-9)" text-anchor="middle" fill="#ff0000" font-size="9.5">A23</text><text transform="translate(922.2 681.7) rotate(12) scale(0.7 1) skewX(-9)" text-anchor="middle" fill="#ff0000" font-size="9.5">B2</text><text transform="translate(983.2 694.7) rotate(12) scale(0.7 1) skewX(-9)" text-anchor="middle" fill="#ff0000" font-size="9.5">A17</text><text transform="translate(1040 706.8) rotate(12) scale(0.7 1) skewX(-9)" text-anchor="middle" fill="#ff0000" font-size="9.5">A32</text><text transform="translate(518.9 664.3) rotate(12) scale(0.7 1) skewX(-9)" text-anchor="middle" fill="#ff0000" font-size="9.5">A29</text><text transform="translate(598.3 681.2) rotate(12) scale(0.7 1) skewX(-9)" text-anchor="middle" fill="#ff0000" font-size="9.5">A5</text><text transform="translate(678.1 698.1) rotate(12) scale(0.7 1) skewX(-9)" text-anchor="middle" fill="#ff0000" font-size="9.5">C4</text><text transform="translate(758 715.1) rotate(12) scale(0.7 1) skewX(-9)" text-anchor="middle" fill="#ff0000" font-size="9.5">C5</text><text transform="translate(837.9 732.1) rotate(12) scale(0.7 1) skewX(-9)" text-anchor="middle" fill="#ff0000" font-size="9.5">A23</text><text transform="translate(908.3 747.1) rotate(12) scale(0.7 1) skewX(-9)" text-anchor="middle" fill="#ff0000" font-size="9.5">B2</text><text transform="translate(969.3 760) rotate(12) scale(0.7 1) skewX(-9)" text-anchor="middle" fill="#ff0000" font-size="9.5">A17</text><text transform="translate(1026.1 772.1) rotate(12) scale(0.7 1) skewX(-9)" text-anchor="middle" fill="#ff0000" font-size="9.5">A30</text><text transform="translate(505.1 729.6) rotate(12) scale(0.7 1) skewX(-9)" text-anchor="middle" fill="#ff0000" font-size="9.5">A27</text><text transform="translate(584.4 746.5) rotate(12) scale(0.7 1) skewX(-9)" text-anchor="middle" fill="#ff0000" font-size="9.5">A4</text><text transform="translate(664.3 763.5) rotate(12) scale(0.7 1) skewX(-9)" text-anchor="middle" fill="#ff0000" font-size="9.5">C2</text><text transform="translate(744.1 780.5) rotate(12) scale(0.7 1) skewX(-9)" text-anchor="middle" fill="#ff0000" font-size="9.5">C2</text><text transform="translate(824 797.4) rotate(12) scale(0.7 1) skewX(-9)" text-anchor="middle" fill="#ff0000" font-size="9.5">A20</text><text transform="translate(894.4 812.4) rotate(12) scale(0.7 1) skewX(-9)" text-anchor="middle" fill="#ff0000" font-size="9.5">B3</text><text transform="translate(955.4 825.4) rotate(12) scale(0.7 1) skewX(-9)" text-anchor="middle" fill="#ff0000" font-size="9.5">A17</text><text transform="translate(1012.2 837.4) rotate(12) scale(0.7 1) skewX(-9)" text-anchor="middle" fill="#ff0000" font-size="9.5">A24</text><text transform="translate(493.4 784.3) rotate(12) scale(0.7 1) skewX(-9)" text-anchor="middle" fill="#ff0000" font-size="9.5">A37</text><text transform="translate(570.5 811.8) rotate(12) scale(0.7 1) skewX(-9)" text-anchor="middle" fill="#ff0000" font-size="9.5">A26</text><text transform="translate(650.4 828.8) rotate(12) scale(0.7 1) skewX(-9)" text-anchor="middle" fill="#ff0000" font-size="9.5">B9</text><text transform="translate(730.2 845.8) rotate(12) scale(0.7 1) skewX(-9)" text-anchor="middle" fill="#ff0000" font-size="9.5">B11</text><text transform="translate(810.1 862.8) rotate(12) scale(0.7 1) skewX(-9)" text-anchor="middle" fill="#ff0000" font-size="9.5">A19</text><text transform="translate(880.6 877.7) rotate(12) scale(0.7 1) skewX(-9)" text-anchor="middle" fill="#ff0000" font-size="9.5">A3</text><text transform="translate(941.5 890.7) rotate(12) scale(0.7 1) skewX(-9)" text-anchor="middle" fill="#ff0000" font-size="9.5">A28</text><text transform="translate(998.4 902.8) rotate(12) scale(0.7 1) skewX(-9)" text-anchor="middle" fill="#ff0000" font-size="9.5">A35</text><text transform="translate(891.4 480.5) rotate(12) scale(0.7 1) skewX(-9)" text-anchor="middle" fill="#ff0000" font-size="9.5">A38</text><text transform="translate(961.3 497.8) rotate(12) scale(0.7 1) skewX(-9)" text-anchor="middle" fill="#ff0000" font-size="9.5">C8</text><text transform="translate(798.1 919.2) rotate(12) scale(0.7 1) skewX(-9)" text-anchor="middle" fill="#ff0000" font-size="9.5">A36</text><text transform="translate(869 932.3) rotate(12) scale(0.7 1) skewX(-9)" text-anchor="middle" fill="#ff0000" font-size="9.5">B12</text><text transform="translate(619.3 382.3) rotate(12) scale(0.74 1) skewX(-9)" text-anchor="middle" fill="#fff" font-size="11.3">3642</text><text transform="translate(698.9 399.2) rotate(12) scale(0.74 1) skewX(-9)" text-anchor="middle" fill="#fff" font-size="11.3">3668</text><text transform="translate(778.8 416.2) rotate(12) scale(0.74 1) skewX(-9)" text-anchor="middle" fill="#fff" font-size="11.3">3668</text><text transform="translate(858.7 433.1) rotate(12) scale(0.74 1) skewX(-9)" text-anchor="middle" fill="#fff" font-size="11.3">3668</text><text transform="translate(933.8 449.1) rotate(12) scale(0.74 1) skewX(-9)" text-anchor="middle" fill="#fff" font-size="11.3">3234</text><text transform="translate(999.5 463.1) rotate(12) scale(0.74 1) skewX(-9)" text-anchor="middle" fill="#fff" font-size="11.3">2800</text><text transform="translate(1058.4 475.6) rotate(12) scale(0.74 1) skewX(-9)" text-anchor="middle" fill="#fff" font-size="11.3">2609</text><text transform="translate(503.2 492.1) rotate(-78) scale(0.74 1) skewX(-9)" text-anchor="middle" fill="#fff" font-size="11.3">2547</text><text transform="translate(490.4 552.5) rotate(-78) scale(0.74 1) skewX(-9)" text-anchor="middle" fill="#fff" font-size="11.3">3000</text><text transform="translate(476.5 617.8) rotate(-78) scale(0.74 1) skewX(-9)" text-anchor="middle" fill="#fff" font-size="11.3">3000</text><text transform="translate(462.6 683.1) rotate(-78) scale(0.74 1) skewX(-9)" text-anchor="middle" fill="#fff" font-size="11.3">3000</text><text transform="translate(449.7 743.8) rotate(-78) scale(0.74 1) skewX(-9)" text-anchor="middle" fill="#fff" font-size="11.3">2568</text><text transform="translate(514.3 439.8) rotate(-78) scale(0.74 1) skewX(-9)" text-anchor="middle" fill="#fff" font-size="11.3">453</text><text transform="translate(439 794.3) rotate(-78) scale(0.74 1) skewX(-9)" text-anchor="middle" fill="#fff" font-size="11.3">432</text><text transform="translate(1111.5 616.2) rotate(-78) scale(0.74 1) skewX(-9)" text-anchor="middle" fill="#fff" font-size="11.3">3000</text><text transform="translate(1097.6 681.5) rotate(-78) scale(0.74 1) skewX(-9)" text-anchor="middle" fill="#fff" font-size="11.3">3000</text><text transform="translate(1083.7 746.9) rotate(-78) scale(0.74 1) skewX(-9)" text-anchor="middle" fill="#fff" font-size="11.3">3000</text><text transform="translate(1069.9 812.2) rotate(-78) scale(0.74 1) skewX(-9)" text-anchor="middle" fill="#fff" font-size="11.3">3000</text><text transform="translate(1056 877.5) rotate(-78) scale(0.74 1) skewX(-9)" text-anchor="middle" fill="#fff" font-size="11.3">3000</text><text transform="translate(852.2 497.9) rotate(-78) scale(0.74 1) skewX(-9)" text-anchor="middle" fill="#fff" font-size="11.3">2553</text><text transform="translate(978.5 526) rotate(-78) scale(0.74 1) skewX(-9)" text-anchor="middle" fill="#fff" font-size="11.3">2446</text><text transform="translate(772.5 880.9) rotate(-78) scale(0.74 1) skewX(-9)" text-anchor="middle" fill="#fff" font-size="11.3">2589</text><text transform="translate(894 905.8) rotate(-78) scale(0.74 1) skewX(-9)" text-anchor="middle" fill="#fff" font-size="11.3">2506</text></g>
<g fill="#fff"><text x="642" y="1054" textLength="286" lengthAdjust="spacingAndGlyphs" font-family="Liberation Serif, serif" font-size="23" font-weight="bold">3#网架下弦节点杆件布置图 1:100</text><rect x="640" y="1061" width="288" height="2" fill="#fff"/><rect x="640" y="1063" width="288" height="1.5" fill="#8c8c8c"/></g>
<g stroke="#fff" stroke-width="1" fill="none"><path d="M61.5 1259 V1309.5 H111.5 M57.5 1304.5 h9 v9 h-9z M63.5 1242 l6 6.5 l6 -6.5 M69.5 1248.5 v6.5 M116.5 1295.5 l12.5 12 M129 1295.5 l-12.5 12"/></g>
<circle cx="1525.8" cy="215" r="53.2" fill="none" stroke="#2a2a2a" stroke-width="13"/><rect x="1500" y="189" width="52" height="52" fill="#9b9ca1"/><rect x="1510" y="199" width="32" height="32" fill="#8b8d95"/>
<g font-family="Liberation Sans, sans-serif" text-anchor="middle" fill="#b4b4b4" font-size="19"><text x="1525.8" y="166">北</text><text x="1525.8" y="280">南</text><text x="1469" y="222.5">西</text><text x="1582" y="222.5">东</text><text x="1526" y="224" fill="#5c5d63" font-size="24">上</text></g>
<rect x="1502" y="303" width="48" height="17" rx="4" fill="#8f9098"/><text x="1506" y="316" font-family="Liberation Sans, sans-serif" font-size="10.5" fill="#4a4b50">WCS</text><path d="M1537.5 309 h7.5 l-3.75 4.5z" fill="none" stroke="#b8b9c0" stroke-width="0.8"/>
</svg>
<div class="ch" style="top:1253px;width:107px;color:#a6a6a6"><span style="font-size:13px">命令</span>: _textedit</div>
<div class="ch" style="top:1273px;width:199px;color:#cfcfcf"><span style="font-size:13px">当前设置</span>: <span style="font-size:13px">编辑模式</span> = Multiple</div>
<div class="ch" style="top:1293px;width:271px;color:#f0f0f0"><span style="font-size:13px">选择注释对象或</span> [<span style="font-size:13px">放弃</span>(U)/<span style="font-size:13px">模式</span>(M)]: *<span style="font-size:13px">取消</span>*</div>
<div class="a" style="left:275px;top:1311px;width:56px;height:27px;background:#222933;border-radius:3px 0 0 0"></div>
<div class="a" style="left:331px;top:1311px;width:1035px;height:26px;background:#b4b4b4;border-radius:2px"></div>
<div class="t" style="left:368px;top:1316px;font-size:12.4px;font-style:italic;color:#6e6e6e">键入命令</div>
<svg style="left:0;top:1338px" width="160" height="20" viewBox="0 1338 160 20"><path d="M12 1338 C18 1338 17 1356 24 1356 H53 C60 1356 59 1338 65 1338Z" fill="#3c4555"/><path d="M63 1338 C68 1339 66 1356 73 1356 H108 C115 1356 113 1338 120 1338Z" fill="#2f3744"/><path d="M120 1338 C124 1339 122 1352 128 1352 H136 C142 1352 141 1340 143 1338Z" fill="#2f3744"/><path d="M127.5 1347 h8 M131.5 1343 v8" stroke="#c8c8c8" stroke-width="1.5"/></svg>
<div class="t" style="left:27px;top:1339px;font-size:12.4px;font-weight:bold;color:#fff">模型</div>
<div class="t" style="left:74px;top:1339px;font-size:12.4px;color:#c9cdd4">布局1</div>
<div class="sc" style="left:440px;width:141px"></div>
<div class="sc" style="left:584px;width:30px"></div>
<div class="sc" style="left:617px;width:64px"></div>
<div class="sc" style="left:684px;width:24px"></div>
<div class="sc" style="left:758px;width:80px"></div>
<div class="sc" style="left:841px;width:21px"></div>
<div class="sc" style="left:887px;width:15px"></div>
<div class="sc" style="left:905px;width:22px"></div>
<div class="sc" style="left:955px;width:22px"></div>
<div class="sc" style="left:979px;width:40px"></div>
<div class="sc" style="left:1022px;width:104px"></div>
<div class="sc" style="left:1129px;width:146px"></div>
<div class="sc" style="left:1278px;width:40px"></div>
<div class="sc" style="left:1320px;width:23px"></div>
<div class="sc" style="left:1346px;width:97px"></div>
<div class="sc" style="left:1445px;width:23px"></div>
<div class="sc" style="left:1471px;width:39px"></div>
<div class="sc" style="left:1512px;width:24px"></div>
<div class="sc" style="left:1566px;width:22px"></div>
<div class="sc" style="left:1591px;width:48px"></div>
<div class="on" style="left:710px;width:23px"></div>
<div class="on" style="left:735px;width:22px"></div>
<div class="on" style="left:863px;width:24px"></div>
<div class="on" style="left:929px;width:24px"></div>
<div class="on" style="left:1087px;width:23px"></div>
<div class="on" style="left:1130px;width:22px"></div>
<div class="on" style="left:1540px;width:23px"></div>
<div class="t" style="left:471px;top:1344px;font-size:12.4px;color:#e6e6e6">138472, -336943, 0</div>
<div class="t" style="left:586px;top:1344px;font-size:12.4px;color:#e6e6e6">模型</div>
<div class="t" style="left:1206px;top:1344px;font-size:12.4px;color:#e6e6e6;letter-spacing:-0.65px">1:1 / 100%</div>
<div class="t" style="left:1375px;top:1344px;font-size:12.4px;color:#e6e6e6">小数</div>
<svg style="left:0;top:0" width="1645" height="1371"><g transform="translate(54 7)"><path d="M0 2H11.8V5.8H16V14H0Z" fill="#d9d9d9"/><path d="M12.4 2.2L15.8 5.3H12.4Z" fill="#f4f4f4"/></g><g transform="translate(78 7)"><path d="M0 2H7L8.5 4H12V6.6H3.6L0 13.6Z" fill="#cdcdcd"/><path d="M4.2 7.4H16L12.4 14.6H0.4Z" fill="#d9d9d9"/></g><g transform="translate(102 7)"><path d="M0 0H16V16H1.6L0 14.4Z" fill="#b9b9b9"/><path d="M3.8 0H13V6H3.8Z" fill="#efefef"/><path d="M3.8 11.4H13V16H3.8Z" fill="#efefef"/><path d="M5.3 13H6.6V15.3H5.3Z" fill="#444"/></g><g transform="translate(126 7)"><path d="M0 0H14V12H9V14H1.4L0 12.6Z" fill="#b9b9b9"/><path d="M3 0H11.4V5.4H3Z" fill="#efefef"/><path d="M3 10H8V14H3Z" fill="#efefef"/><path d="M7.2 14.2L13.6 7.2L16 9.6L9.4 16.2Z" fill="#f2c463"/><path d="M13.6 7.2L14.8 6L16.9 8.3L16 9.6Z" fill="#ee4b57"/><path d="M7.2 14.2L9.4 16.2L6.6 16.8Z" fill="#f4f4f4"/></g><g transform="translate(151 7)"><path d="M0 0H10V16H0Z" fill="#d9d9d9"/><path d="M1.2 1.6H8.8V13H1.2Z" fill="#6b6b6b"/><path d="M4 14H6V15H4Z" fill="#777"/><path d="M7 9H10L11 10.2H15V16H7Z" fill="#e0b050"/><path d="M8.4 11.4H16L14.6 16H7Z" fill="#f2c463"/></g><g transform="translate(173 7)"><path d="M4 0H14V16H4Z" fill="#d9d9d9"/><path d="M5.2 1.6H12.8V13H5.2Z" fill="#6b6b6b"/><path d="M8 14H10V15H8Z" fill="#777"/><path d="M1.6 4.8H6.6V2.6L10.6 6L6.6 9.4V7.2H1.6Z" fill="#55b4f0"/></g><g transform="translate(198 7)"><path d="M3.3 0H12.7V4.4H3.3Z" fill="#f4f4f4"/><path d="M0 4.4H16V12.6H12.7V9.6H3.3V12.6H0Z" fill="#e6e6e6"/><path d="M3.3 9.6H12.7V16H3.3Z" fill="#f4f4f4"/><path d="M4.6 11H11.4V14.7H4.6Z" fill="#6cb8f2"/></g><g transform="translate(222 7)"><path d="M0 6.8L6.8 1.6V4.8C12.4 4.8 15.8 7.2 16.2 11.6C13.8 9 11.2 8.6 6.8 8.8V12Z" fill="#d9d9d9"/></g><g transform="translate(239 7)"><path d="M4.6 6.4H11.4L8 10Z" fill="#f0f0f0"/></g><g transform="translate(258 7)"><path d="M16.2 6.8L9.4 1.6V4.8C3.8 4.8 0.4 7.2 0 11.6C2.4 9 5 8.6 9.4 8.8V12Z" fill="#6f7682"/></g><g transform="translate(275 7)"><path d="M4.6 6.4H11.4L8 10Z" fill="#8e949e"/></g><g transform="translate(16 82)"><path d="M0 2H11.8V5.8H16V14H0Z" fill="#d9d9d9"/><path d="M12.4 2.2L15.8 5.3H12.4Z" fill="#f4f4f4"/></g><g transform="translate(39 82)"><path d="M0 2H7L8.5 4H12V6.6H3.6L0 13.6Z" fill="#cdcdcd"/><path d="M4.2 7.4H16L12.4 14.6H0.4Z" fill="#d9d9d9"/></g><g transform="translate(62 82)"><path d="M0 0H16V16H1.6L0 14.4Z" fill="#b9b9b9"/><path d="M3.8 0H13V6H3.8Z" fill="#efefef"/><path d="M3.8 11.4H13V16H3.8Z" fill="#efefef"/><path d="M5.3 13H6.6V15.3H5.3Z" fill="#444"/></g><g transform="translate(91 82)"><path d="M3.3 0H12.7V4.4H3.3Z" fill="#f4f4f4"/><path d="M0 4.4H16V12.6H12.7V9.6H3.3V12.6H0Z" fill="#e6e6e6"/><path d="M3.3 9.6H12.7V16H3.3Z" fill="#f4f4f4"/><path d="M4.6 11H11.4V14.7H4.6Z" fill="#6cb8f2"/></g><g transform="translate(114 82)"><path d="M0 1H11.6V5.4H16V12.6H0Z" fill="#d9d9d9"/><path d="M12.3 1.2L15.8 4.7H12.3Z" fill="#f4f4f4"/><circle cx="8.4" cy="11.4" r="2.9" fill="#3b4453" stroke="#f4f4f4" stroke-width="1.3"/><path d="M10.6 13.6L13.6 16.6" fill="none" stroke="#e8c690" stroke-width="1.2"/></g><g transform="translate(136 82)"><path d="M3 0H11.6V3.6H3Z" fill="#f4f4f4"/><path d="M0.4 3.6H14.4V11H11.6V9H3V11H0.4Z" fill="#e6e6e6"/><path d="M3 9H8.6V13.6H3Z" fill="#f4f4f4"/><path d="M4 10.4H8V12.6H4Z" fill="#6cb8f2"/><path d="M7.6 12H12V10L16.2 13.2L12 16.4V14.4H7.6Z" fill="#5ab2f2"/></g><g transform="translate(160 82)"><path d="M1 6L6 3L13 6V12L8 15.6L1 12Z" fill="#cfcfcf"/><path d="M1 6L8 9.4V15.6L1 12Z" fill="#e6e6e6"/><circle cx="11" cy="5.2" r="5" fill="#5fd0dc"/><path d="M6.4 5.2C9 2 13 2 15.6 5.2C13 8.6 9 8.6 6.4 5.2M11 0.4C8.6 3 8.6 7.6 11 10" fill="none" stroke="#ee6a4a" stroke-width="0.9"/><path d="M9.6 3.6L13 5.4L9.6 7Z" fill="none" stroke="#f3b33d" stroke-width="0.8"/></g><g transform="translate(188 82)"><path d="M0 0H11.6V12.6H0Z" fill="#d9d9d9"/><path d="M2 3.2H9.6M2 6.6H7M2 10H6" fill="none" stroke="#5a5a5a" stroke-width="1.1"/><path d="M7 5.6L14.4 14M15.4 5.6L8.4 14" fill="none" stroke="#f4f4f4" stroke-width="1.5"/><circle cx="8.4" cy="14.4" r="1.5" fill="none" stroke="#f4f4f4" stroke-width="1.1"/><circle cx="14.4" cy="14.4" r="1.5" fill="none" stroke="#f4f4f4" stroke-width="1.1"/></g><g transform="translate(212 82)"><path d="M0 0H6.4V2H3V12.6H0Z" fill="#cfcfcf"/><path d="M3.8 2.6H10L13.6 6.2V16H3.8Z" fill="#d9d9d9"/><path d="M10.6 2.8L13.4 5.6H10.6Z" fill="#f4f4f4"/></g><g transform="translate(234 82)"><path d="M0 2H10.4V5H4V14H0Z" fill="#e2b172"/><path d="M3.4 0.8L5.2 -0.6L7 0.8V2.4H3.4Z" fill="#f4f4f4"/><path d="M4.8 5.8H10.6L14 9.2V16H4.8Z" fill="#d9d9d9"/><path d="M11.2 6L13.8 8.6H11.2Z" fill="#f4f4f4"/></g><g transform="translate(258 82)"><path d="M0 0H11V14H0Z" fill="#d9d9d9"/><path d="M1.6 1.8H8.4V5H1.6Z" fill="#6cb8f2"/><path d="M2.4 8.4H7M2.4 8.4l1.4 -1.2M2.4 8.4l1.4 1.2M2.4 11.6H6" fill="none" stroke="#6a6a6a" stroke-width="1"/><path d="M6.4 11L8.6 8.8L14.6 14.6L12.4 16.8Z" fill="#f2c463"/><path d="M8.6 8.8L11.8 6L16 10.4L13.2 13.2Z" fill="#f4f4f4"/></g><g transform="translate(281 82)"><path d="M1.4 4.4H8.6V12.4H1.4Z" fill="#6f7785"/><path d="M1.4 4.4H8.6V12.4H1.4Z" fill="none" stroke="#d9d9d9" stroke-width="1.2"/><circle cx="12.4" cy="12.4" r="3.2" fill="#6f7785" stroke="#d9d9d9" stroke-width="1.2"/><path d="M0.2 11.6H2.2V13.6H0.2Z" fill="#f4f4f4"/><path d="M7.6 6.8L13 0.8L15.4 3L10 9Z" fill="#f2c463"/><path d="M13 0.8L14.2 -0.6L16.6 1.6L15.4 3Z" fill="#ee4b57"/><path d="M7.6 6.8L10 9L7 9.8Z" fill="#f4f4f4"/></g><g transform="translate(311 82)"><path d="M0 6.8L6.8 1.6V4.8C12.4 4.8 15.8 7.2 16.2 11.6C13.8 9 11.2 8.6 6.8 8.8V12Z" fill="#d9d9d9"/></g><g transform="translate(329 82)"><path d="M4.6 6.4H11.4L8 10Z" fill="#f0f0f0"/></g><g transform="translate(346 82)"><path d="M16.2 6.8L9.4 1.6V4.8C3.8 4.8 0.4 7.2 0 11.6C2.4 9 5 8.6 9.4 8.8V12Z" fill="#d9d9d9"/></g><g transform="translate(365 82)"><path d="M4.6 6.4H11.4L8 10Z" fill="#8e949e"/></g><g transform="translate(388 82)"><path d="M5.2 16C3.6 13.6 1.8 11.8 0.4 10.6C1.2 9.2 3 9.6 4.4 11.4L3.2 3.2C4.2 2 5.4 2.6 5.6 3.8L6.6 8L6.8 1.2C7.8 0 9.2 0.4 9.2 1.6L9.6 8L11 2.2C12.2 1.4 13.2 2 13 3.2L12.2 9L14.4 5.6C15.6 5.2 16.2 6 15.8 7L13.6 12.4C13 14 12.2 15.2 11.4 16Z" fill="#d9d9d9"/></g><g transform="translate(411 82)"><path d="M0.6 3.4H7.4M4 0V6.8M0.6 9H7.4" fill="none" stroke="#d9d9d9" stroke-width="1.3"/><circle cx="11" cy="11" r="2.7" fill="none" stroke="#f4f4f4" stroke-width="1.3"/><path d="M13 13L16 16.4" fill="none" stroke="#e8c690" stroke-width="1.2"/></g><g transform="translate(434 82)"><path d="M0.6 0.6H13.6V13.6H0.6Z" fill="none" stroke="#d9d9d9" stroke-width="1.3"/><circle cx="11" cy="11" r="2.8" fill="#3b4453" stroke="#f4f4f4" stroke-width="1.3"/><path d="M13 13L15.4 15.4" fill="none" stroke="#e8c690" stroke-width="1.2"/><path d="M13.6 16.4H16.4V13.6Z" fill="#f4f4f4"/></g><g transform="translate(457 82)"><path d="M3.4 5H9V13H3.4Z" fill="#6f7785"/><path d="M0.8 11V14.6H4M11 1H14.6V4.4M3.4 5V8" fill="none" stroke="#d9d9d9" stroke-width="1.2"/><path d="M0 2.6L4 -0.6V1.4C8 1.2 10 3 10.4 5.4C8.6 4 6.6 3.8 4 4V5.8Z" fill="#55b4f0"/><circle cx="11.2" cy="11" r="2.8" fill="#3b4453" stroke="#f4f4f4" stroke-width="1.3"/><path d="M13.2 13L16 16.4" fill="none" stroke="#e8c690" stroke-width="1.2"/></g><g transform="translate(486 82)"><path d="M2 0H14V16H2Z" fill="#d9d9d9"/><path d="M4 1.8H12V7.2H4Z" fill="#6cb8f2"/><path d="M4.4 10H11.6M4.4 13.2H11.6M6.6 8.8V11.2M9.6 12V14.4" fill="none" stroke="#5a5a5a" stroke-width="1"/></g><g transform="translate(509 82)"><path d="M0 0H4.6V16H0Z" fill="#d9d9d9"/><path d="M5.6 0H16V16H5.6Z" fill="#d9d9d9"/><path d="M2.4 2.4V14" fill="none" stroke="#5a5a5a" stroke-width="1" stroke-dasharray="1.2 1.6"/><path d="M7.4 2H9.6V4.2H7.4ZM12 2H14.2V4.2H12ZM7.4 6.4H9.6V8.6H7.4ZM12 6.4H14.2V8.6H12ZM8.4 11H13.2V14H8.4Z" fill="none" stroke="#5a5a5a" stroke-width="1"/></g><g transform="translate(532 82)"><path d="M2 0H13.6V6.6L11.4 9V16H2Z" fill="#f4f4f4"/><path d="M4 2.6H6.2V4.8H4ZM7.6 2.6H9.8V4.8H7.6ZM4 6.8H6.2V9H4ZM7.6 6.8H9.8V9H7.6ZM4 11H6.2V13.2H4ZM7.6 11H9.8V13.2H7.6Z" fill="#4a4a4a"/><path d="M12.2 8.4L13.6 6.8V10.4L12.2 11.6Z" fill="#f4f4f4"/></g><g transform="translate(555 82)"><path d="M0 4H6L9.6 0.2C11 -0.4 12.4 0.6 12.8 1.6L16 10.6C16.6 13.4 15 15.8 12 16H0Z" fill="#d9d9d9"/><path d="M6 4L11.6 13.6M14.6 12.4C13.4 10.6 10.6 12.6 12.6 14.2" fill="none" stroke="#5a6270" stroke-width="0.9"/></g><g transform="translate(578 82)"><path d="M0 0H8V6L5.6 8.4H0Z" fill="#f6cd62"/><path d="M4.4 4.4H8V6L5.6 8H4.4Z" fill="#d9a93c"/><path d="M9.6 1H11.2V6.4H9.6ZM12.6 4H14.4V7H12.6Z" fill="#d9d9d9"/><path d="M1 9.6H5.6V11.4H1ZM4.4 13H6.4V14.8H4.4Z" fill="#d9d9d9"/><path d="M7.4 8H16V16H7.4Z" fill="#f4f4f4"/><path d="M7.4 8H16V9.6H7.4Z" fill="#9a9a9a"/><path d="M9 11.6H10.2M11.4 11.6H14.6M9 14H10.2M11.4 14H14.6" fill="none" stroke="#4a4a4a" stroke-width="1.1"/></g><g transform="translate(601 82)"><path d="M2 0H14V16H2Z" fill="#d9d9d9"/><path d="M4 2H12V4.6H4Z" fill="#5a5a5a"/><path d="M4 6.4H6V8.2H4ZM7 6.4H9V8.2H7ZM10 6.4H12V8.2H10ZM4 9.6H6V11.4H4ZM7 9.6H9V11.4H7ZM10 9.6H12V11.4H10ZM4 12.8H6V14.6H4ZM7 12.8H9V14.6H7ZM10 12.8H12V14.6H10Z" fill="#5a5a5a"/></g><g transform="translate(630 82)"><circle cx="8" cy="8" r="8" fill="#d9d9d9"/><text x="8" y="13" text-anchor="middle" font-family="Liberation Sans, sans-serif" font-weight="bold" font-size="13.5" fill="#8c8c8c">?</text></g><g transform="translate(16 109)"><path d="M0 4.4L7.6 5.4V15L0 14Z" fill="#f4f4f4"/><path d="M16 4.4L8.4 5.4V15L16 14Z" fill="#f4f4f4"/><path d="M0 14.6H16V15.6H9L8 16.4L7 15.6H0Z" fill="#c8c8c8"/><path d="M1.6 7.4H6M1.6 9.6H6M1.6 11.8H6M10 7.4H14.4M10 9.6H14.4M10 11.8H14.4" fill="none" stroke="#c4c4c4" stroke-width="1"/><path d="M3.6 8.6L10.2 1.2L12.8 3.4L6.4 10.8L3.4 11.4Z" fill="#3b4453"/><path d="M4.8 8.4L10.4 2.2L12 3.6L6.4 9.8Z" fill="#f2c463"/><path d="M10.4 2.2L11.8 0.6L13.4 2L12 3.6Z" fill="#ee4b57"/><path d="M4.8 8.4L6.4 9.8L4.4 10.2Z" fill="#f4f4f4"/></g><g transform="translate(39 109)"><path d="M0 4.4L7.6 5.4V15L0 14Z" fill="#f4f4f4"/><path d="M16 4.4L8.4 5.4V15L16 14Z" fill="#f4f4f4"/><path d="M0 14.6H16V15.6H9L8 16.4L7 15.6H0Z" fill="#c8c8c8"/><path d="M1.6 7.4H6M1.6 9.6H6M1.6 11.8H6M10 7.4H14.4M10 9.6H14.4M10 11.8H14.4" fill="none" stroke="#c4c4c4" stroke-width="1"/><path d="M7.6 3L10 5.6L14.6 0.6" fill="none" stroke="#3fb257" stroke-width="2"/></g><g transform="translate(62 109)"><path d="M5 1H14L10 4.6H1Z" fill="#d9d9d9"/><path d="M1.4 7H8.6V8.4H1.4ZM1.4 10H8.6V11.4H1.4Z" fill="#f4f4f4"/><path d="M10 6L13 3.4" fill="none" stroke="#f4f4f4" stroke-width="1"/><path d="M9.6 8H15.6V15.6H9.6Z" fill="#f88b92"/><path d="M9.6 13H15.6V13.8H9.6Z" fill="#f4f4f4"/></g><g transform="translate(95 109)"><path d="M1.5 0.5V15.5M14.5 0.5V15.5" fill="none" stroke="#d9d9d9" stroke-width="1.2"/><path d="M3 5.5H13" fill="none" stroke="#6cb8f2" stroke-width="1.2"/><path d="M2.4 5.5L5 4V7ZM13.6 5.5L11 4V7Z" fill="#6cb8f2"/></g><g transform="translate(118 109)"><path d="M0.6 4.6L5.4 0.4M10.4 15.4L15.4 11" fill="none" stroke="#d9d9d9" stroke-width="1.3"/><path d="M3.6 3L12.6 12.6" fill="none" stroke="#6cb8f2" stroke-width="1.2"/><circle cx="3.8" cy="3.2" r="1.3" fill="#6cb8f2"/><circle cx="12.4" cy="12.4" r="1.3" fill="#6cb8f2"/></g><g transform="translate(141 109)"><path d="M4.6 15C4.6 9 9 5.4 15 5.4M15.5 0.5V7M0.5 15.5H7" fill="none" stroke="#d9d9d9" stroke-width="1.3"/><path d="M2 14C2 7 7 2.6 13.6 2.6" fill="none" stroke="#6cb8f2" stroke-width="1.3"/><path d="M14.8 2.6L12 1.2V4ZM2 14.8L0.6 12H3.4Z" fill="#6cb8f2"/></g><g transform="translate(164 109)"><path d="M1.5 0V15.5H16" fill="none" stroke="#d9d9d9" stroke-width="1.2"/><path d="M2 8.5H11.4M7.5 5V15" fill="none" stroke="#6cb8f2" stroke-width="1.2"/><path d="M6.2 0.4L8.6 3.6M8.6 0.4L6.2 3.6M12.4 5.4L13.6 7.2L14.8 5.4M13.6 7.2V9.4" fill="none" stroke="#6cb8f2" stroke-width="0.9"/></g><g transform="translate(192 109)"><path d="M1 15.6C1 7 7 1 15.6 1" fill="none" stroke="#d9d9d9" stroke-width="1.3"/><path d="M7.2 7.2L15.4 15.6" fill="none" stroke="#6cb8f2" stroke-width="1.2"/><circle cx="7.2" cy="7.2" r="1.4" fill="#6cb8f2"/></g><g transform="translate(216 109)"><path d="M1 15.6C1 7 7 1 15.6 1" fill="none" stroke="#d9d9d9" stroke-width="1.3"/><path d="M6.4 6.8L10.6 10.4L10.2 6.8L15.4 12" fill="none" stroke="#6cb8f2" stroke-width="1.2"/><circle cx="6.4" cy="6.8" r="1.4" fill="#6cb8f2"/></g><g transform="translate(238 109)"><circle cx="8" cy="8" r="7.3" fill="none" stroke="#d9d9d9" stroke-width="1.3"/><path d="M3.4 3.4L12.6 12.6" fill="none" stroke="#6cb8f2" stroke-width="1.2"/><path d="M2.8 2.8L6 3.6L3.6 6ZM13.2 13.2L10 12.4L12.4 10Z" fill="#6cb8f2"/></g><g transform="translate(262 109)"><path d="M0.6 10L10.6 0.4M0.5 15.5H16" fill="none" stroke="#d9d9d9" stroke-width="1.3"/><path d="M9.6 4C12 6.6 13.6 10.6 13.6 14.4" fill="none" stroke="#6cb8f2" stroke-width="1.2"/><circle cx="9.6" cy="4" r="1.3" fill="#6cb8f2"/><path d="M13.6 15.2L12.2 12.4H15Z" fill="#6cb8f2"/></g><g transform="translate(291 109)"><path d="M0.5 0.5V16M15.5 0.5V16" fill="none" stroke="#d9d9d9" stroke-width="1.2"/><path d="M2 3.5H14M2.5 2V5M13.5 2V5" fill="none" stroke="#d9d9d9" stroke-width="1"/><path d="M9.6 6L5 11H8L6 15.4L11.6 9.6H8.4L10.6 6Z" fill="#f2c463"/></g><g transform="translate(314 109)"><path d="M1.5 1V15.5M12.5 8V15.5" fill="none" stroke="#d9d9d9" stroke-width="1.2"/><path d="M3 5.5H14M3 11.5H11" fill="none" stroke="#6cb8f2" stroke-width="1.2"/><path d="M2.4 5.5L4.8 4.2V6.8ZM15.6 5.5L13.2 4.2V6.8ZM2.4 11.5L4.8 10.2V12.8ZM11.8 11.5L9.4 10.2V12.8Z" fill="#6cb8f2"/></g><g transform="translate(336 109)"><path d="M1.5 1V15.5M8.5 1V15.5M15.5 1V15.5" fill="none" stroke="#d9d9d9" stroke-width="1.2"/><path d="M3 5.5H14" fill="none" stroke="#6cb8f2" stroke-width="1.2"/><path d="M2.4 5.5L4.6 4.3V6.7ZM7.6 5.5L5.4 4.3V6.7ZM9.4 5.5L11.6 4.3V6.7ZM14.6 5.5L12.4 4.3V6.7Z" fill="#6cb8f2"/></g><g transform="translate(360 109)"><path d="M1.6 1.5H14.4M1.6 14.5H14.4" fill="none" stroke="#d9d9d9" stroke-width="1.2"/><path d="M0 1.5L2.4 0.1V2.9ZM16 1.5L13.6 0.1V2.9ZM0 14.5L2.4 13.1V15.9ZM16 14.5L13.6 13.1V15.9Z" fill="#d9d9d9"/><path d="M6 3.6H10.4V12.4H6Z" fill="#f2c463"/><path d="M6 5.4H8M6 7.2H7.4M6 9H8M6 10.8H7.4" fill="none" stroke="#8a6a20" stroke-width="0.8"/></g><g transform="translate(382 109)"><path d="M7.5 0.4V11.6M4 15.5H11M14.5 3.6V10" fill="none" stroke="#d9d9d9" stroke-width="1.2"/><path d="M7.5 14.6L5 11H10Z" fill="#d9d9d9"/><path d="M0.6 6.5H5M9.6 6.5H12" fill="none" stroke="#6cb8f2" stroke-width="1.3"/><path d="M14.2 6.5L11 4.4V8.6Z" fill="#6cb8f2"/></g><g transform="translate(412 109)"><path d="M0.5 3.5H15.5V12.5H0.5ZM8.5 3.5V12.5" fill="none" stroke="#d9d9d9" stroke-width="1.2"/><circle cx="4.5" cy="8" r="2.2" fill="none" stroke="#d9d9d9" stroke-width="1.1"/><path d="M4.5 4.6V11.4M1.2 8H7.8" fill="none" stroke="#d9d9d9" stroke-width="1.1"/><path d="M10.4 10H11.8V11.6H10.4Z" fill="#d9d9d9"/><path d="M12.4 6.2L13.5 5.2V11.6" fill="none" stroke="#d9d9d9" stroke-width="1.2"/></g><g transform="translate(434 109)"><circle cx="8" cy="8" r="7.3" fill="none" stroke="#d9d9d9" stroke-width="1.3"/><path d="M5.6 8H10.4M8 5.6V10.4" fill="none" stroke="#6cb8f2" stroke-width="1.3"/></g><g transform="translate(458 109)"><path d="M0.5 0.5V16M15.5 0.5V16" fill="none" stroke="#d9d9d9" stroke-width="1.2"/><path d="M2 3.5H14M2.5 2V5M13.5 2V5" fill="none" stroke="#d9d9d9" stroke-width="1"/><path d="M4.6 10.4L7.2 13L12 8" fill="none" stroke="#3fb257" stroke-width="2"/></g><g transform="translate(480 109)"><path d="M2.6 7.6H5.6L7.6 2.4L10.4 13.4L12.4 7.6H15.6" fill="none" stroke="#d9d9d9" stroke-width="1.2"/><path d="M0 7.6L3.4 5.4V9.8Z" fill="#d9d9d9"/></g><g transform="translate(510 109)"><path d="M0.5 7V16M15.5 7V16" fill="none" stroke="#d9d9d9" stroke-width="1.2"/><path d="M2 11.5H14M2.5 10V13M13.5 10V13" fill="none" stroke="#d9d9d9" stroke-width="1"/><path d="M5.4 7.4L10.6 1.4L12.8 3.2L7.6 9.2Z" fill="#f2c463"/><path d="M10.6 1.4L11.8 0L14 1.8L12.8 3.2Z" fill="#ee4b57"/><path d="M5.4 7.4L7.6 9.2L4.8 9.8Z" fill="#f4f4f4"/></g><g transform="translate(532 109)"><path d="M0.5 8V16M15.5 8V16" fill="none" stroke="#d9d9d9" stroke-width="1.2"/><path d="M2 12.5H14M2.5 11V14M13.5 11V14" fill="none" stroke="#d9d9d9" stroke-width="1"/><path d="M4.6 9.4L8 1L11.4 9.4M5.8 6.6H10.2" fill="none" stroke="#c8c8c8" stroke-width="1.5"/></g><g transform="translate(556 109)"><path d="M0.5 0.5V16M15.5 0.5V16" fill="none" stroke="#d9d9d9" stroke-width="1.2"/><path d="M2 3.5H14M2.5 2V5M13.5 2V5" fill="none" stroke="#d9d9d9" stroke-width="1"/><path d="M4.4 10.4C5 7.6 9.4 6.8 11.2 9M11.6 11.6C11 14.4 6.6 15.2 4.8 13" fill="none" stroke="#3fb257" stroke-width="1.3"/><path d="M12.6 7L12.2 10.4L9.2 9.2ZM3.4 15L3.8 11.6L6.8 12.8Z" fill="#3fb257"/></g><g transform="translate(705 109)"><path d="M0.5 7.6V15.4M15.5 7.6V15.4M2 11.5H14" fill="none" stroke="#d9d9d9" stroke-width="1.2"/><path d="M1.6 11.5L4 10.1V12.9ZM14.4 11.5L12 10.1V12.9Z" fill="#d9d9d9"/><path d="M5.4 9.4C6 7 8.6 5.6 10.4 5.8L11.4 7.2C10.6 9 8.4 10 5.4 9.4Z" fill="#e8a868"/><path d="M11 6.2L14.6 1.4" fill="none" stroke="#f4f4f4" stroke-width="1.6"/></g><g transform="translate(738 109)"><path d="M5.6 2.8H13.2V10.4H5.6Z" fill="#8ccbf7"/><path d="M5.6 2.8L8.2 0.2H15.8L13.2 2.8Z" fill="#b4dcfb"/><path d="M13.2 2.8L15.8 0.2V7.8L13.2 10.4Z" fill="#6fb6ea"/><path d="M0 7.4H8.4V16H0Z" fill="#8ccbf7"/><path d="M0 7.4L2.4 5H5.6V7.4Z" fill="#b4dcfb"/><path d="M8.4 16V10.4H11.2V13.2Z" fill="#6fb6ea"/></g><g transform="translate(761 109)"><path d="M0 6.6H5V11.4H10.6L8 14L7.4 16H0Z" fill="#8ccbf7"/><path d="M0 6.6L2.6 4.6H5V6.6Z" fill="#a8d8fa"/><path d="M5.6 2.8H13.2V10.399999999999999H5.6Z" fill="#d9d9d9"/><path d="M5.6 2.8L8.399999999999999 0H16.0L13.2 2.8Z" fill="#f4f4f4"/><path d="M13.2 2.8L16.0 0V7.6L13.2 10.399999999999999Z" fill="#bdbdbd"/></g><g transform="translate(784 109)"><path d="M0 7H6V10.6H10V14L8 16H0Z" fill="#d9d9d9"/><path d="M0 7L2.4 5H6V7Z" fill="#f4f4f4"/><path d="M5.6 2.8H13.2V10.399999999999999H5.6Z" fill="#d9d9d9"/><path d="M5.6 2.8L8.399999999999999 0H16.0L13.2 2.8Z" fill="#f4f4f4"/><path d="M13.2 2.8L16.0 0V7.6L13.2 10.399999999999999Z" fill="#bdbdbd"/><path d="M5.6 6.6H9.8V10.6H5.6Z" fill="#8ccbf7"/><path d="M5.6 10.6V6.6H9.8" fill="none" stroke="#3b4453" stroke-width="0.8"/></g><g transform="translate(812 109)"><path d="M1 2.6C2 1 3 0.6 4.6 0.4V16H1Z" fill="#d9d9d9"/><path d="M5.6 2.6L11.6 0.4V13.4L5.6 16Z" fill="#8ccbf7"/><path d="M4.6 2.6L7 0.4H11.6L5.6 2.6Z" fill="#a8d8fa"/><path d="M10 8H14.6" fill="none" stroke="#f4f4f4" stroke-width="1.3"/><path d="M16.4 8L13.6 6V10Z" fill="#f4f4f4"/></g><g transform="translate(836 109)"><path d="M4 0.4V9.6M-0.6 5H8.6" fill="none" stroke="#f4f4f4" stroke-width="1.3"/><path d="M4 -1L2.2 1.4H5.8ZM4 11L2.2 8.6H5.8ZM-2 5L0.4 3.2V6.8ZM10 5L7.6 3.2V6.8Z" fill="#f4f4f4"/><path d="M8.4 8H16V15" fill="none" stroke="#d9d9d9" stroke-width="1.2"/><path d="M6.6 9.6H14V16.6H6.6Z" fill="#8ccbf7"/></g><g transform="translate(859 109)"><path d="M6 2.4L8 0.4H16V10L13.6 12.4V2.4Z" fill="#8ccbf7"/><path d="M0.4 3H13.4V16H0.4Z" fill="#d9d9d9"/><path d="M2.2 4.8H11.6V14.2H2.2Z" fill="none" stroke="#3b4453" stroke-width="0.9"/></g><g transform="translate(882 109)"><path d="M0.6 16V8.6L5 3.4H8.4L5.6 8L8 16Z" fill="#d9d9d9"/><path d="M6.6 8L9.6 3.6L13.4 12.6L10.2 15.4Z" fill="#8ccbf7"/><path d="M10.4 0.6L16 6.6M16 0.6L10.4 6.6" fill="none" stroke="#ee4b57" stroke-width="1.8"/></g><g transform="translate(905 109)"><path d="M5.6 1.2C3 -0.4 -0.4 2 0.6 5.2C1.6 8 5.6 8.2 6.8 5.4" fill="none" stroke="#f4f4f4" stroke-width="1.3"/><path d="M4.4 -0.6L7.6 1.4L4.4 3Z" fill="#f4f4f4"/><path d="M8.4 7.6H16V15" fill="none" stroke="#d9d9d9" stroke-width="1.2"/><path d="M6.6 9.4H14V16.4H6.6Z" fill="#8ccbf7"/></g><g transform="translate(928 109)"><path d="M0.6 16V8L5 2.4H8L5.4 8L8.6 16Z" fill="#d9d9d9"/><path d="M6.4 7.6L9.6 2.8L14 11.4L10.4 15.6Z" fill="#8ccbf7"/><path d="M12.4 1.6L16 9.6" fill="none" stroke="#f4f4f4" stroke-width="1.3"/><path d="M11.6 0L14 2.2L11.8 3.4Z" fill="#f4f4f4"/></g><g transform="translate(951 109)"><path d="M6 2.8H13.6V12.399999999999999H6Z" fill="#8ccbf7"/><path d="M6 2.8L8.8 0H16.4L13.6 2.8Z" fill="#f4f4f4"/><path d="M13.6 2.8L16.4 0V9.6L13.6 12.399999999999999Z" fill="#bdbdbd"/><path d="M1 6.6H9.6V16H1Z" fill="#8ccbf7"/><path d="M1 3.6C1 1.6 2 1.2 4 1.2" fill="none" stroke="#f4f4f4" stroke-width="1.1"/><path d="M0 3.4H2.2L1.1 5.2Z" fill="#f4f4f4"/></g><g transform="translate(974 109)"><path d="M0 0H3.6V3.6H0Z" fill="#6cb8f2"/><path d="M4.8 0H8.4V3.6H4.8Z" fill="#ee4b57"/><path d="M0 4.8H3.6V8.4H0Z" fill="#f4b27a"/><path d="M5.6 7.800000000000001H13.2V15.8H5.6Z" fill="#8ccbf7"/><path d="M5.6 7.800000000000001L8.2 5.2H15.799999999999999L13.2 7.800000000000001Z" fill="#f4f4f4"/><path d="M13.2 7.800000000000001L15.799999999999999 5.2V13.2L13.2 15.8Z" fill="#bdbdbd"/></g><g transform="translate(1003 109)"><path d="M0.6 16V5.6L4.6 0.6H10C13.6 1 16 4 16.2 8.4L12.8 12.6V16Z" fill="#d9d9d9"/><path d="M6.6 1.6C10.4 0.4 15.6 3.4 16.2 8.4L13.6 11C13 6 10.2 3.4 6.6 1.6Z" fill="#8ccbf7"/><path d="M5 1L8 4.4" fill="none" stroke="#f4f4f4" stroke-width="1"/></g><g transform="translate(1026 109)"><path d="M0.6 9L9.4 0.4H12L16.4 5V16H5.4L0.6 12Z" fill="#c4c4c4"/><path d="M2 8.6L9 1.4L12.6 4.6L5.6 11.6Z" fill="#8ccbf7"/><path d="M0.6 9L5.4 13V16L0.6 12Z" fill="#f4f4f4"/><path d="M9.4 0.4H12L16.4 5L14 5Z" fill="#f4f4f4"/></g><g transform="translate(1049 109)"><path d="M5.4 5.4H13.0V15.8H5.4Z" fill="#d9d9d9"/><path d="M5.4 5.4L8.4 2.4H16.0L13.0 5.4Z" fill="#f4f4f4"/><path d="M13.0 5.4L16.0 2.4V12.8L13.0 15.8Z" fill="#bdbdbd"/><path d="M1.6 6.4V16M4 6.4V16" fill="none" stroke="#6cb8f2" stroke-width="1.2"/><path d="M1 3.6C1 1.6 2 1.2 4.6 1.2" fill="none" stroke="#f4f4f4" stroke-width="1.1"/><path d="M0 3.4H2.2L1.1 5.2Z" fill="#f4f4f4"/></g><g transform="translate(1072 109)"><path d="M0 0H3.6V3.6H0Z" fill="#6cb8f2"/><path d="M4.8 0H8.4V3.6H4.8Z" fill="#ee4b57"/><path d="M0 4.8H3.6V8.4H0Z" fill="#f4b27a"/><path d="M5 8.2H13V16.2H5Z" fill="#d9d9d9"/><path d="M5 8.2L7.8 5.4H15.8L13 8.2Z" fill="#f4f4f4"/><path d="M13 8.2L15.8 5.4V13.4L13 16.2Z" fill="#bdbdbd"/><path d="M5 8.8H13" fill="none" stroke="#6cb8f2" stroke-width="1.4"/></g><g transform="translate(1102 109)"><path d="M3 0V6M0 3H6" fill="none" stroke="#4ad06a" stroke-width="2"/><path d="M5 5H16V16H5Z" fill="#d9d9d9"/><path d="M8.4 8.4H12.6V12.6H8.4Z" fill="none" stroke="#2a8de0" stroke-width="1.3"/></g><g transform="translate(1124 109)"><path d="M5.6 3.1999999999999997H13.2V12.799999999999999H5.6Z" fill="#d9d9d9"/><path d="M5.6 3.1999999999999997L8.399999999999999 0.4H16.0L13.2 3.1999999999999997Z" fill="#f4f4f4"/><path d="M13.2 3.1999999999999997L16.0 0.4V10.0L13.2 12.799999999999999Z" fill="#bdbdbd"/><path d="M3.6 4H4.8V10.4H3.6Z" fill="#e8a868"/><path d="M2.6 10.4H5.8L8 15.6H0.4Z" fill="#f2c463"/></g><g transform="translate(1147 109)"><path d="M0 5.4H4V15.0H0Z" fill="#d9d9d9"/><path d="M0 5.4L2.4 3H6.4L4 5.4Z" fill="#f4f4f4"/><path d="M4 5.4L6.4 3V12.6L4 15.0Z" fill="#cfcfcf"/><path d="M7.6 0.4V16" fill="none" stroke="#6cb8f2" stroke-width="1.2"/><path d="M9.4 5.4H13.4V15.0H9.4Z" fill="#8ccbf7"/><path d="M9.4 5.4L11.8 3H15.8L13.4 5.4Z" fill="#a8d8fa"/><path d="M13.4 5.4L15.8 3V12.6L13.4 15.0Z" fill="#8ccbf7"/></g><g transform="translate(1170 109)"><path d="M0.4 6.6H11.4V17.6H0.4Z" fill="none"/><path d="M0.4 6.6L4.4 2.6H15.4L11.4 6.6Z" fill="#f4f4f4"/><path d="M11.4 6.6L15.4 2.6V13.6L11.4 17.6Z" fill="#c8c8c8"/><path d="M0.4 5.2H11.4V16.2H0.4Z" fill="#f4f4f4"/><path d="M2 6.8H9.8V14.6H2Z" fill="#3b4453"/><path d="M2 6.8H5.6V11H9.8V14.6H2Z" fill="#8ccbf7"/></g><g transform="translate(1193 109)"><path d="M4 3.4H13V13.0H4Z" fill="#d9d9d9"/><path d="M4 3.4L7 0.4H16L13 3.4Z" fill="#f4f4f4"/><path d="M13 3.4L16 0.4V10.0L13 13.0Z" fill="#bdbdbd"/><path d="M1 11.6L4 14.6L8.6 9.6" fill="none" stroke="#3fb257" stroke-width="2"/></g><g transform="translate(663 82)"><path d="M5 1H14L10 4.6H1Z" fill="#d9d9d9"/><path d="M1.4 7H9V8.4H1.4ZM1.4 10H9V11.4H1.4Z" fill="#f4f4f4"/><path d="M10.4 6L13 3.6" fill="none" stroke="#f4f4f4" stroke-width="1"/><path d="M9 6.4H16V16H9Z" fill="#f4f4f4"/><path d="M10.4 8H14.6V10.4H10.4Z" fill="#6cb8f2"/><path d="M11 13.2H14.6M11 13.2l1.2 -1M11 13.2l1.2 1" fill="none" stroke="#555" stroke-width="0.9"/></g><g transform="translate(686 82)"><circle cx="8" cy="6.4" r="5.4" fill="#f5a51d"/><path d="M5.8 10.4H10.2V12H5.8Z" fill="#f5a51d"/><path d="M6.2 12.4H9.8V14.4L9 15.4H7L6.2 14.4Z" fill="#7a7a7a"/></g><g transform="translate(704 82)"><circle cx="8" cy="8" r="4.4" fill="#f5a51d"/><path d="M8 0.4V2.2M8 13.8V15.6M0.4 8H2.2M13.8 8H15.6M2.6 2.6L3.9 3.9M12.1 12.1L13.4 13.4M13.4 2.6L12.1 3.9M2.6 13.4L3.9 12.1" fill="none" stroke="#f5a51d" stroke-width="1.2"/></g><g transform="translate(724 82)"><path d="M3 3H11.6V11.6H3Z" fill="#e8e8e8"/><path d="M0.6 4V0.6H4M10.6 0.6H14V4M0.6 10.6V14H4" fill="none" stroke="#4a4a4a" stroke-width="1.2"/><circle cx="12" cy="12" r="2.4" fill="#f5a51d"/><path d="M12 7.6V8.6M12 15.4V16.4M7.6 12H8.6M15.4 12H16.4M9 9L9.6 9.6M15 15L14.4 14.4M15 9L14.4 9.6M9 15L9.6 14.4" fill="none" stroke="#f5a51d" stroke-width="1"/></g><g transform="translate(743 82)"><path d="M1 7H12.4V16H1Z" fill="#f5a51d"/><path d="M9.4 7V3.6C9.4 0 14.6 0 14.6 3.6V5.2" fill="none" stroke="#f5a51d" stroke-width="1.8"/><path d="M6.2 10H7.4V13.2H6.2Z" fill="#f4f4f4"/></g><g transform="translate(986 82)"><circle cx="8.4" cy="3.2" r="3.2" fill="#d9d9d9"/><path d="M4.6 5H16L11.6 9H0.4Z" fill="#6cb8f2"/><path d="M0.6 10.6L2 9.6H12.4L15.4 7V8.6L12 11.8H0.6ZM0.6 14.4L2 13.4H12.4L15.4 10.8V12.4L12 15.6H0.6Z" fill="#d9d9d9"/></g><g transform="translate(1009 82)"><path d="M5.6 4.6H16L11.6 8.6H1Z" fill="#d9d9d9"/><path d="M0.8 10.4L2.2 9.4H12.4L15.4 6.8V8.4L12 11.6H0.8ZM0.8 14.2L2.2 13.2H12.4L15.4 10.6V12.2L12 15.4H0.8Z" fill="#d9d9d9"/><path d="M0 2.6L4 -0.4V1.4C7.6 1.4 9.4 3 9.6 5.6C8 4.2 6.2 3.8 4 4V5.8Z" fill="#55b4f0"/></g><g transform="translate(1032 82)"><path d="M5 1H14L10 4.6H1Z" fill="#d9d9d9"/><path d="M1.4 7H9V8.4H1.4ZM1.4 10H9V11.4H1.4Z" fill="#f4f4f4"/><path d="M10.4 6L13 3.6" fill="none" stroke="#f4f4f4" stroke-width="1"/><path d="M8.4 8.4H16V16H8.4Z" fill="#f4f4f4"/><path d="M8.4 8.4H16V9.8H8.4Z" fill="#a0a0a0"/><path d="M10 12H11M12 12H14.6M10 14.2H11M12 14.2H14.6" fill="none" stroke="#4a4a4a" stroke-width="1"/></g><path d="M84.5 81V99M182.5 81V99M303.5 81V99M381.5 81V99M479.5 81V99M623.5 81V99" stroke="#000" stroke-width="1" fill="none"/><path d="M85.5 81V99M183.5 81V99M304.5 81V99M382.5 81V99M480.5 81V99M624.5 81V99" stroke="#e6e6e6" stroke-width="1" fill="none"/><path d="M186.5 108V126M284.5 108V126M405.5 108V126M502.5 108V126M578.5 108V126M806.5 108V126M996.5 108V126M1094.5 108V126" stroke="#000" stroke-width="1" fill="none"/><path d="M187.5 108V126M285.5 108V126M406.5 108V126M503.5 108V126M579.5 108V126M807.5 108V126M997.5 108V126M1095.5 108V126" stroke="#e6e6e6" stroke-width="1" fill="none"/><path d="M972.1 88l3.4 3.2l3.4 -3.2M1200.6 88l3.4 3.2l3.4 -3.2M1365.6 88l3.4 3.2l3.4 -3.2M1496.6 88l3.4 3.2l3.4 -3.2M690.6 115.5l3.4 3.2l3.4 -3.2" fill="none" stroke="#4a4a4a" stroke-width="1.2"/><path d="M1621.6 88l3.4 3.2l3.4 -3.2" fill="none" stroke="#b8b8b8" stroke-width="1.2"/><rect x="763.6" y="83.6" width="12.8" height="12.8" fill="#fff" stroke="#000" stroke-width="1.3"/><rect x="1065" y="83.6" width="12.8" height="12.8" fill="#fff" stroke="#000" stroke-width="1.3"/><path d="M1223 90.5H1280M1389 90.5H1424" fill="none" stroke="#000" stroke-width="1.4"/><g transform="translate(620 1344)"><path d="M0 5.5H16M0 10.5H16M5.5 0V16M10.5 0V16" fill="none" stroke="#e8e8e8" stroke-width="1.2"/></g><g transform="translate(645 1344)"><path d="M1 1h2v2h-2zM1 6.5h2v2h-2zM1 12h2v2h-2zM6.5 1h2v2h-2zM6.5 6.5h2v2h-2zM6.5 12h2v2h-2zM12 1h2v2h-2zM12 6.5h2v2h-2zM12 12h2v2h-2z" fill="#e8e8e8"/></g><g transform="translate(665 1344)"><path d="M4.4 6.4H11.6L8 10.2Z" fill="#e0e0e0"/></g><g transform="translate(687 1344)"><path d="M1 9H7.6V15.6H1Z" fill="#e8e8e8"/><path d="M7.5 9V1.5H14.5V6.5H7.5" fill="none" stroke="#e8e8e8" stroke-width="1.2"/></g><g transform="translate(713 1344)"><path d="M1 4.5H7M4 1.5V7.5" fill="none" stroke="#fff" stroke-width="1.3"/><path d="M6.4 9.4H15.4V13.6H6.4Z" fill="#fff"/><path d="M7.6 10.6H12V12.4H7.6Z" fill="#5b8ec4"/></g><g transform="translate(738 1344)"><path d="M1.5 0V15.5H16M1.5 9.5H7.5V15.5" fill="none" stroke="#fff" stroke-width="1.2"/></g><g transform="translate(762 1344)"><circle cx="7" cy="9" r="6.3" fill="none" stroke="#e8e8e8" stroke-width="1.2"/><path d="M7 9H14.4M7 9L15 1" fill="none" stroke="#e8e8e8" stroke-width="1.2"/></g><g transform="translate(783 1344)"><path d="M4.4 6.4H11.6L8 10.2Z" fill="#e0e0e0"/></g><g transform="translate(802 1344)"><path d="M8 0.4V16" fill="none" stroke="#4ad06a" stroke-width="1.2"/><path d="M2 0.6L14.6 15.4" fill="none" stroke="#ee4b57" stroke-width="1.2"/><path d="M6.6 6.8H9.4V9.6H6.6Z" fill="#222"/><path d="M7 7.2H9V9.2H7Z" fill="none" stroke="#f4f4f4" stroke-width="0.8"/></g><g transform="translate(822 1344)"><path d="M4.4 6.4H11.6L8 10.2Z" fill="#e0e0e0"/></g><g transform="translate(843 1344)"><path d="M0.4 14.5H16M1.4 14L14 1" fill="none" stroke="#e8e8e8" stroke-width="1.2"/><path d="M6.4 6.8H9.6V10H6.4Z" fill="#e8e8e8"/></g><g transform="translate(866 1344)"><path d="M3.5 3.5H15.5V15.5H3.5Z" fill="none" stroke="#fff" stroke-width="1.3"/><path d="M0.6 0.6H6V6H0.6Z" fill="#5b8ec4"/><path d="M1.5 1.5H5.5V5.5H1.5Z" fill="none" stroke="#fff" stroke-width="1.1"/></g><g transform="translate(887 1344)"><path d="M4.4 6.4H11.6L8 10.2Z" fill="#e0e0e0"/></g><g transform="translate(908 1344)"><path d="M0.4 2.5H16" fill="none" stroke="#e8e8e8" stroke-width="1.2"/><path d="M0.4 5H10V7.6H0.4ZM0.4 10H8V13.6H0.4Z" fill="#e8e8e8"/><path d="M10 6.3H16M8 11.8H16" fill="none" stroke="#e8e8e8" stroke-width="1.1"/></g><g transform="translate(933 1344)"><path d="M0.6 0.6H15.4V15.4H0.6Z" fill="none" stroke="#fff" stroke-width="1.2"/><path d="M2 2H5V5H2ZM8 2H11V5H8ZM5 5H8V8H5ZM11 5H14V8H11ZM2 8H5V11H2ZM8 8H11V11H8ZM5 11H8V14H5ZM11 11H14V14H11Z" fill="#fff"/></g><g transform="translate(958 1344)"><path d="M0.4 3H5.6M3 0.4V5.6" fill="none" stroke="#e8e8e8" stroke-width="1.1"/><path d="M4 6.5H13.5V8" fill="none" stroke="#e8e8e8" stroke-width="1.1"/><path d="M6 8H15.6V16H6Z" fill="#7fd89a"/></g><g transform="translate(982 1344)"><path d="M4.4 5.4H12.4V13.4H4.4ZM4.4 5.4L8 1.6H16L12.4 5.4M16 1.6V9.6L12.4 13.4" fill="none" stroke="#e8e8e8" stroke-width="1.2"/><path d="M1.4 11.4H5.4V15.4H1.4Z" fill="none" stroke="#f4a860" stroke-width="1.3"/></g><g transform="translate(1003 1344)"><path d="M4.4 6.4H11.6L8 10.2Z" fill="#e0e0e0"/></g><g transform="translate(1025 1344)"><path d="M2.5 1V13.5H15" fill="none" stroke="#e8e8e8" stroke-width="1.3"/><path d="M2.5 -0.6L0.4 2.6H4.6ZM16.6 13.5L13.4 11.4V15.6Z" fill="#e8e8e8"/><path d="M10.4 2L7 7H9.4L8 11L12.4 5.6H9.8L11.4 2Z" fill="#e8e8e8"/></g><g transform="translate(1049 1344)"><path d="M2.5 4.5H10.5V14H2.5ZM2.5 4.5L6 1H14.5L10.5 4.5M14.5 1V10" fill="none" stroke="#e8e8e8" stroke-width="1.1" stroke-dasharray="2.4 1.4"/><path d="M1 3H4V6H1ZM9 3H12V6H9ZM1 12.4H4V15.4H1ZM9 12.4H12V15.4H9Z" fill="#7cc4f5"/></g><g transform="translate(1070 1344)"><path d="M4.4 6.4H11.6L8 10.2Z" fill="#e0e0e0"/></g><g transform="translate(1090 1344)"><path d="M8 0.8L14.6 4.6V12L8 15.6L1.4 12V4.6ZM8 8.4V0.8M8 8.4L1.4 12M8 8.4L14.6 12" fill="none" stroke="#fff" stroke-width="1.1"/><circle cx="8" cy="8.4" r="1.5" fill="#5b8ec4" stroke="#fff" stroke-width="1"/><circle cx="8" cy="1.4" r="1.4" fill="#5b8ec4" stroke="#fff" stroke-width="1"/><circle cx="1.8" cy="12" r="1.4" fill="#5b8ec4" stroke="#fff" stroke-width="1"/><circle cx="14.2" cy="12" r="1.4" fill="#5b8ec4" stroke="#fff" stroke-width="1"/></g><g transform="translate(1110 1344)"><path d="M4.4 6.4H11.6L8 10.2Z" fill="#e0e0e0"/></g><g transform="translate(1133 1344)"><path d="M6 0L7.4 7L11.6 15.4L6 10.8L0.4 15.4L4.6 7Z" fill="#fff"/><circle cx="12.6" cy="3.4" r="2.2" fill="none" stroke="#fff" stroke-width="1.1"/></g><g transform="translate(1157 1344)"><path d="M6 0L7.4 7L11.6 15.4L6 10.8L0.4 15.4L4.6 7Z" fill="#c8c8c8"/><path d="M13.6 0L10.6 4.4H12.6L11.4 7.6L15.4 3H13.2L14.8 0Z" fill="#c8c8c8"/></g><g transform="translate(1180 1344)"><path d="M8 0L9.4 7L13.6 15.4L8 10.8L2.4 15.4L6.6 7Z" fill="#c8c8c8"/></g><g transform="translate(1259 1344)"><path d="M4.4 6.4H11.6L8 10.2Z" fill="#e0e0e0"/></g><g transform="translate(1282 1344)"><g transform="translate(8 8)"><rect x="-1.7" y="-8" width="3.4" height="16" fill="#e4e4e4" transform="rotate(0)"/><rect x="-1.7" y="-8" width="3.4" height="16" fill="#e4e4e4" transform="rotate(45)"/><rect x="-1.7" y="-8" width="3.4" height="16" fill="#e4e4e4" transform="rotate(90)"/><rect x="-1.7" y="-8" width="3.4" height="16" fill="#e4e4e4" transform="rotate(135)"/><circle r="5.6" fill="#e4e4e4"/><circle r="2.5" fill="#394252"/></g></g><g transform="translate(1302 1344)"><path d="M4.4 6.4H11.6L8 10.2Z" fill="#e0e0e0"/></g><g transform="translate(1323 1344)"><path d="M0.4 8H15.6M8 0.4V15.6" fill="none" stroke="#f0f0f0" stroke-width="1.5"/></g><g transform="translate(1350 1344)"><path d="M5 0H11.4V16H5Z" fill="#e8e8e8"/><path d="M8 2.5H11.4M9 5.5H11.4M8 8.5H11.4M9 11.5H11.4M8 14H11.4" fill="none" stroke="#394252" stroke-width="1"/></g><g transform="translate(1427 1344)"><path d="M4.4 6.4H11.6L8 10.2Z" fill="#e0e0e0"/></g><g transform="translate(1448 1344)"><path d="M2.5 0.5H13.5V15.5H2.5Z" fill="none" stroke="#e8e8e8" stroke-width="1.2"/><path d="M4.4 4.5H6M7.4 4.5H12M4.4 8H6M7.4 8H12M4.4 11.5H6M7.4 11.5H12" fill="none" stroke="#e8e8e8" stroke-width="1.3"/></g><g transform="translate(1474 1344)"><path d="M0.5 11V0.8H12.5V6" fill="none" stroke="#e8e8e8" stroke-width="1.2"/><path d="M0.5 2.5H12.5" fill="none" stroke="#e8e8e8" stroke-width="1.6"/><path d="M7.6 10H14.4V16H7.6Z" fill="#e8e8e8"/><path d="M12.6 10V8.4C12.6 6 16.2 6 16.2 8.4" fill="none" stroke="#e8e8e8" stroke-width="1.1"/></g><g transform="translate(1495 1344)"><path d="M4.4 6.4H11.6L8 10.2Z" fill="#e0e0e0"/></g><g transform="translate(1517 1344)"><path d="M1.5 0.5H7.5V6.5H1.5Z" fill="none" stroke="#e8e8e8" stroke-width="1.1"/><circle cx="12.4" cy="6.4" r="2.8" fill="none" stroke="#e8e8e8" stroke-width="1.1"/><path d="M6.4 9.6L9.4 15.4H3.4Z" fill="none" stroke="#e8e8e8" stroke-width="1.1"/></g><g transform="translate(1543 1344)"><circle cx="8" cy="8" r="7" fill="#7aa6d8" stroke="#fff" stroke-width="1.4"/><path d="M5 12L12 5" fill="none" stroke="#fff" stroke-width="1.6"/></g><g transform="translate(1569 1344)"><path d="M1 4H12V12.6H1Z" fill="#3d7fc4"/><path d="M8 0.6L12.6 4H8Z" fill="#2a5e98"/><path d="M1 8.6H7V12.6H1Z" fill="#f0b020"/><path d="M4 0.4V8M0.4 4H8" fill="none" stroke="#f4f4f4" stroke-width="0.9"/><circle cx="4" cy="4" r="1.6" fill="none" stroke="#f4f4f4" stroke-width="0.9"/><path d="M7.4 12L10.4 15L16 8.6" fill="none" stroke="#3fb257" stroke-width="2.2"/></g><g transform="translate(1595 1344)"><path d="M0.5 2.5H15.5V13.5H0.5Z" fill="none" stroke="#e8e8e8" stroke-width="1.1"/><path d="M3.4 10.6L6.6 7.4M9.4 8.6L12.6 5.4" fill="none" stroke="#e8e8e8" stroke-width="1.1"/><path d="M2.6 11.4V8.4L5.6 11.4ZM13.4 4.6V7.6L10.4 4.6Z" fill="#e8e8e8"/></g><g transform="translate(1619 1344)"><path d="M0 2.5H16M0 8H16M0 13.5H16" fill="none" stroke="#f0f0f0" stroke-width="1.8"/></g><g transform="translate(8 145)"><path d="M1.6 14.4L14.4 1.6" fill="none" stroke="#d9d9d9" stroke-width="1.2"/><path d="M0.3999999999999999 13.6h2v2h-2z" fill="#7cc4f5"/><path d="M13.6 0.3999999999999999h2v2h-2z" fill="#7cc4f5"/></g><g transform="translate(8 167)"><path d="M3 13L13 3" fill="none" stroke="#d9d9d9" stroke-width="1.2" stroke-dasharray="2 2.2"/><path d="M0.6 15.4L1.8 10.8L5.2 14.2ZM15.4 0.6L14.2 5.2L10.8 1.8Z" fill="#d9d9d9"/><path d="M7 7h2v2h-2z" fill="#7cc4f5"/></g><g transform="translate(8 189)"><path d="M1 12.5H9.6C13.6 12.5 14.6 9 13.6 7C12.6 5 10.6 4.8 9.6 5.4" fill="none" stroke="#d9d9d9" stroke-width="1.2" stroke-dasharray="5 1.6"/><path d="M0.3999999999999999 11.5h2v2h-2z" fill="#7cc4f5"/><path d="M8.6 11.5h2v2h-2z" fill="#7cc4f5"/><path d="M8.6 3.5999999999999996h2v2h-2z" fill="#7cc4f5"/></g><g transform="translate(8 211)"><path d="M8 1.4L14.6 6.2L12 14H4L1.4 6.2Z" fill="none" stroke="#d9d9d9" stroke-width="1.2"/><path d="M7 7h2v2h-2z" fill="#7cc4f5"/><path d="M11 13.2h2v2h-2z" fill="#7cc4f5"/></g><g transform="translate(8 233)"><path d="M1.5 2.5H14.5V12.5H1.5Z" fill="none" stroke="#d9d9d9" stroke-width="1.3"/><path d="M0.3999999999999999 1.4h2v2h-2z" fill="#7cc4f5"/><path d="M13.8 11.8h2v2h-2z" fill="#7cc4f5"/></g><g transform="translate(8 255)"><path d="M2 14.6C2.6 8 7 3 14.6 2" fill="none" stroke="#d9d9d9" stroke-width="1.2" stroke-dasharray="4.4 1.8"/><path d="M1 13.6h2v2h-2z" fill="#7cc4f5"/><path d="M5 4.6h2v2h-2z" fill="#7cc4f5"/><path d="M13.8 0.8h2v2h-2z" fill="#7cc4f5"/></g><g transform="translate(8 277)"><circle cx="8" cy="8" r="7.3" fill="none" stroke="#d9d9d9" stroke-width="1.2"/><path d="M7.4 7.4h2v2h-2z" fill="#7cc4f5"/><path d="M9.6 7L12.6 4" fill="none" stroke="#7cc4f5" stroke-width="1.1"/><path d="M13.4 3L12.8 6L10.6 3.6Z" fill="#7cc4f5"/></g><g transform="translate(8 299)"><path d="M4 12.6C1 13.4 -0.4 10.4 1.6 8.6C-0.2 6.4 1.6 3.4 4.4 4.4C5.4 1.6 9 1.6 9.8 4C12 2.4 15 4.4 13.8 7C16.4 8 16 11.6 13.4 12C13 14.8 9.6 15.4 8.2 13.4C7 15.2 4.2 14.8 4 12.6Z" fill="none" stroke="#d9d9d9" stroke-width="1.1"/></g><g transform="translate(8 321)"><path d="M1.6 15C0.6 10 2.6 6 4.6 5.4C7 5 8 10.6 11.4 10.6C14.6 10 14.6 5 15 1" fill="none" stroke="#d9d9d9" stroke-width="1.2" stroke-dasharray="3.6 1.8"/><path d="M0.6000000000000001 13.8h2v2h-2z" fill="#7cc4f5"/><path d="M3.4000000000000004 4.2h2v2h-2z" fill="#7cc4f5"/><path d="M10.6 9.8h2v2h-2z" fill="#7cc4f5"/><path d="M14 0.19999999999999996h2v2h-2z" fill="#7cc4f5"/></g><g transform="translate(8 343)"><path d="M1.2 8C1.2 1.6 14.8 1.6 14.8 8C14.8 14.4 1.2 14.4 1.2 8Z" fill="none" stroke="#d9d9d9" stroke-width="1.2"/><path d="M0.3999999999999999 7h2v2h-2z" fill="#7cc4f5"/><path d="M7 2.4h2v2h-2z" fill="#7cc4f5"/><path d="M13.6 7h2v2h-2z" fill="#7cc4f5"/></g><g transform="translate(8 365)"><path d="M7 13.6C1 12 -0.6 6.6 3.6 3.4C7 1 13 2 15 6" fill="none" stroke="#d9d9d9" stroke-width="1.2"/><path d="M7 7h2v2h-2z" fill="#7cc4f5"/><path d="M13.6 6.6h2v2h-2z" fill="#7cc4f5"/><path d="M6.4 12h2v2h-2z" fill="#7cc4f5"/></g><g transform="translate(8 387)"><path d="M7 0H12.6L16 3.4V14H7Z" fill="#7cc4f5"/><path d="M12.8 0.2L15.8 3.2H12.8Z" fill="#b8e0fb"/><path d="M13 11H16V14H13Z" fill="#f4f4f4"/><path d="M1.5 6.5H9.5V12.5H1.5Z" fill="none" stroke="#d9d9d9" stroke-width="1.2"/><path d="M2.2 7.2H9V12H2.2Z" fill="#6f7785"/><circle cx="10.6" cy="12" r="3" fill="#6f7785" stroke="#d9d9d9" stroke-width="1.1"/><path d="M0.4 11.6H2.4V13.6H0.4Z" fill="#f4f4f4"/></g><g transform="translate(8 409)"><path d="M1.5 6.5H9.5V12.5H1.5Z" fill="none" stroke="#d9d9d9" stroke-width="1.2"/><path d="M2.2 7.2H9V12H2.2Z" fill="#6f7785"/><circle cx="10.6" cy="12" r="3" fill="#6f7785" stroke="#d9d9d9" stroke-width="1.1"/><path d="M0.4 11.6H2.4V13.6H0.4Z" fill="#f4f4f4"/><g transform="translate(12 4)"><rect x="-0.8" y="-4.2" width="1.6" height="8.4" fill="#f5b83d" transform="rotate(0)"/><rect x="-0.8" y="-4.2" width="1.6" height="8.4" fill="#f5b83d" transform="rotate(45)"/><rect x="-0.8" y="-4.2" width="1.6" height="8.4" fill="#f5b83d" transform="rotate(90)"/><rect x="-0.8" y="-4.2" width="1.6" height="8.4" fill="#f5b83d" transform="rotate(135)"/><circle r="2.4" fill="#f5b83d"/></g></g><g transform="translate(8 431)"><path d="M7 2h2v2h-2z" fill="#f4f4f4"/><path d="M2 7h2v2h-2z" fill="#f4f4f4"/><path d="M12 7h2v2h-2z" fill="#f4f4f4"/><path d="M7 12h2v2h-2z" fill="#f4f4f4"/></g><g transform="translate(8 453)"><path d="M4 4H12V12H4Z" fill="#58aef0"/><path d="M4 8L8 4M4 12L12 4M8 12L12 8M4 10L10 4M6 12L12 6" fill="none" stroke="#2a6eb0" stroke-width="0.8"/><path d="M3.5 0.4V15.6M12.5 0.4V15.6M0.4 3.5H15.6M0.4 12.5H15.6" fill="none" stroke="#d9d9d9" stroke-width="1.2"/></g><g transform="translate(8 475)"><defs><linearGradient id="gr1" x1="0" y1="0" x2="0" y2="1"><stop offset="0" stop-color="#6cb8f2"/><stop offset="1" stop-color="#4a5262"/></linearGradient></defs><rect x="4" y="4" width="8" height="8" fill="url(#gr1)"/><path d="M3.5 0.4V15.6M12.5 0.4V15.6M0.4 3.5H15.6M0.4 12.5H15.6" fill="none" stroke="#d9d9d9" stroke-width="1.2"/></g><g transform="translate(8 497)"><path d="M0.4 1.6H11L15.6 6.4V14.4H0.4Z" fill="#d9d9d9"/><circle cx="7.6" cy="8" r="2.4" fill="#3b4453"/></g><g transform="translate(8 519)"><path d="M0.5 1.5H15.5V14.5H0.5ZM0.5 5.5H15.5M0.5 8.5H15.5M0.5 11.5H15.5M5.5 5.5V14.5M10.5 5.5V14.5" fill="none" stroke="#d9d9d9" stroke-width="1.1"/><path d="M0.5 3.5H15.5" fill="none" stroke="#d9d9d9" stroke-width="1.8"/></g><g transform="translate(8 541)"><path d="M2.6 15L8 1.4L13.4 15M4.6 10.4H11.4" fill="none" stroke="#d9d9d9" stroke-width="1.8"/></g><g transform="translate(8 563)"><circle cx="3.6" cy="4" r="3.6" fill="#5fd67a"/><circle cx="12.4" cy="12.6" r="3.6" fill="#7cc4f5"/><path d="M8 3.5H12.5V7" fill="none" stroke="#f4f4f4" stroke-width="1.2"/><path d="M12.5 9L10.6 6.4H14.4Z" fill="#f4f4f4"/></g><g transform="translate(1616 145)"><path d="M4.6 11L12.6 1.6L15.6 4.4L8 13.4Z" fill="#f2c463"/><path d="M4.6 11L8 13.4L6 15.2C4.4 16 2.6 14.6 3.2 12.8Z" fill="#f0505a"/><path d="M12.6 1.6L13.8 0.4L16.4 3L15.6 4.4Z" fill="#f8dc98"/><path d="M0.4 15.5H3M6.6 15.5H16" fill="none" stroke="#7cc4f5" stroke-width="1"/></g><g transform="translate(1616 167)"><circle cx="4" cy="3.6" r="3" fill="none" stroke="#d9d9d9" stroke-width="1.2"/><circle cx="7" cy="12.4" r="3" fill="none" stroke="#7cc4f5" stroke-width="1.2"/><circle cx="12.4" cy="12.4" r="3" fill="none" stroke="#7cc4f5" stroke-width="1.2"/><path d="M9 3.5H12.5V6" fill="none" stroke="#f4f4f4" stroke-width="1.2"/><path d="M12.5 8L10.6 5.4H14.4Z" fill="#f4f4f4"/></g><g transform="translate(1616 189)"><path d="M6.4 2V14.5H1Z" fill="none" stroke="#d9d9d9" stroke-width="1.2"/><path d="M9.6 2V14.5H15Z" fill="none" stroke="#7cc4f5" stroke-width="1.2"/></g><g transform="translate(1616 211)"><path d="M16 1.5H7C-1 1.5 -1 14.5 7 14.5H16" fill="none" stroke="#7cc4f5" stroke-width="1.3"/><path d="M16 5.5H8C4.4 5.5 4.4 10.5 8 10.5H16" fill="none" stroke="#d9d9d9" stroke-width="1.3"/></g><g transform="translate(1616 233)"><path d="M1.5 1.5H6.5V6.5H1.5Z" fill="none" stroke="#d9d9d9" stroke-width="1.2"/><path d="M9.5 1.5H14.5V6.5H9.5ZM1.5 9.5H6.5V14.5H1.5ZM9.5 9.5H14.5V14.5H9.5Z" fill="none" stroke="#7cc4f5" stroke-width="1.2"/><path d="M13 16.4H16.4V13Z" fill="#f4f4f4"/></g><g transform="translate(1616 255)"><path d="M8 2V14M2 8H14" fill="none" stroke="#f4f4f4" stroke-width="1.4"/><path d="M8 -0.4L5.4 3H10.6ZM8 16.4L5.4 13H10.6ZM-0.4 8L3 5.4V10.6ZM16.4 8L13 5.4V10.6Z" fill="#f4f4f4"/></g><g transform="translate(1616 277)"><path d="M9.4 2.6C4 1.6 0.6 6 1.6 10.4C2.8 15 9 16.4 12.6 13C14.4 11.2 15 9 14.6 7" fill="none" stroke="#d9d9d9" stroke-width="1.3"/><path d="M8 -0.2L12.4 2.4L8 5.2Z" fill="#d9d9d9"/></g><g transform="translate(1616 299)"><path d="M0.5 7V0.5H15.5V15.5H9" fill="none" stroke="#7cc4f5" stroke-width="1.2"/><path d="M0.5 8.5H7.5V15.5H0.5Z" fill="none" stroke="#d9d9d9" stroke-width="1.3"/></g><g transform="translate(1616 321)"><path d="M0.5 0.5H6.5V15.5H0.5Z" fill="none" stroke="#d9d9d9" stroke-width="1.2"/><path d="M8.4 0.5H12.6L15.4 15.5H6.5" fill="none" stroke="#7cc4f5" stroke-width="1.1"/><path d="M4 10.5H10" fill="none" stroke="#f4f4f4" stroke-width="1.2"/><path d="M11.6 10.5L8.8 8.6V12.4Z" fill="#f4f4f4"/></g><g transform="translate(1616 343)"><path d="M0.4 1.5H5M12.6 1.5H16" fill="none" stroke="#7cc4f5" stroke-width="1" stroke-dasharray="1.6 1.2"/><path d="M6.6 1L10.8 10.6M12.4 2.4L8.2 10.6" fill="none" stroke="#f4f4f4" stroke-width="2"/><circle cx="7.2" cy="13" r="1.9" fill="none" stroke="#f4f4f4" stroke-width="1.2"/><circle cx="12" cy="12.6" r="1.9" fill="none" stroke="#f4f4f4" stroke-width="1.2"/></g><g transform="translate(1616 365)"><path d="M14.5 0.5V15.5" fill="none" stroke="#d9d9d9" stroke-width="1.3"/><path d="M0.4 7.5H6.6" fill="none" stroke="#d9d9d9" stroke-width="1.2"/><path d="M7 7.5H11" fill="none" stroke="#f4f4f4" stroke-width="1.2"/><path d="M13 7.5L10.2 5.4V9.6Z" fill="#f4f4f4"/><path d="M0.4 11.5H13" fill="none" stroke="#7cc4f5" stroke-width="1" stroke-dasharray="1.6 1.2"/></g><g transform="translate(1616 387)"><path d="M10 4.5H15.5V14.5H0.5V4.5H6" fill="none" stroke="#d9d9d9" stroke-width="1.3"/><path d="M10.5 0.6V5.6" fill="none" stroke="#7cc4f5" stroke-width="1.2"/></g><g transform="translate(1616 409)"><path d="M11 4.5H15.5V14.5H0.5V4.5H5" fill="none" stroke="#d9d9d9" stroke-width="1.3"/><path d="M5.5 1.6V6M10.5 1.6V6" fill="none" stroke="#7cc4f5" stroke-width="1.2"/></g><g transform="translate(1616 431)"><path d="M0.4 8H4.6M11.4 8H15.6" fill="none" stroke="#d9d9d9" stroke-width="1.2"/><path d="M8 8L3.8 5.6V10.4ZM8 8L12.2 5.6V10.4Z" fill="#7cc4f5"/></g><g transform="translate(1616 453)"><path d="M1.5 16V10M10.6 1.5H16" fill="none" stroke="#d9d9d9" stroke-width="1.3"/><path d="M1.6 9.6L9.6 1.6" fill="none" stroke="#7cc4f5" stroke-width="1.2"/></g><g transform="translate(1616 475)"><path d="M1.5 16V10.4M9.6 1.5H16" fill="none" stroke="#d9d9d9" stroke-width="1.3"/><path d="M1.5 10.4C1.5 5 5 1.5 9.6 1.5" fill="none" stroke="#7cc4f5" stroke-width="1.2"/></g><g transform="translate(1616 497)"><path d="M1 15.6C1.2 13.6 1.6 12.4 2 11M14 5C14.6 3.6 15 2.4 15.2 0.6" fill="none" stroke="#d9d9d9" stroke-width="1.3"/><path d="M2 11C3.6 6 6.4 4.6 8.4 8C10.4 11.6 12.6 9.6 14 5" fill="none" stroke="#7cc4f5" stroke-width="1.2"/></g><g transform="translate(1616 519)"><path d="M2.6 5.6L7 1H15.4V10.4L11 15M15.4 1L11 5.6" fill="none" stroke="#7cc4f5" stroke-width="1.1"/><path d="M1.5 6.5H10V15.5H1.5Z" fill="none" stroke="#d9d9d9" stroke-width="1.4"/></g><g transform="translate(310 7)"><path d="M0.6 7.6L15.6 0.6L11 14.4L7.4 10L5.6 13.6L5 9.2Z" fill="#55b4f0"/><path d="M5 9.2L15.6 0.6L7.4 10L5.6 13.6Z" fill="#2f86cc"/></g><g transform="translate(290 6)"><path d="M3.6 4.5H12.4" fill="none" stroke="#e8e8e8" stroke-width="1.4"/><path d="M3.6 7H12.4L8 11.6Z" fill="#e8e8e8"/></g><g transform="translate(1260 7)"><circle cx="6.4" cy="6.4" r="5.2" fill="#3a4250" stroke="#e8e8e8" stroke-width="1.4"/><path d="M10.2 10.2L15.2 15.4" fill="none" stroke="#e8c690" stroke-width="1.6"/></g><g transform="translate(1284 6)"><circle cx="8" cy="4.2" r="4" fill="#78c4f8"/><path d="M0.6 15.6C0.6 10.4 4 8.6 8 8.6C12 8.6 15.4 10.4 15.4 15.6Z" fill="#78c4f8"/></g><g transform="translate(1385 7)"><path d="M5 6.6H11L8 9.8Z" fill="#e0e0e0"/></g><g transform="translate(1406 7)"><path d="M0.6 2.5H3L5 10.5H13L14.6 4.5H4" fill="none" stroke="#e0e0e0" stroke-width="1.3"/><path d="M4.6 5H14L12.8 10H5.8Z" fill="#e0e0e0"/><circle cx="6" cy="13.4" r="1.4" fill="#e0e0e0"/><circle cx="12" cy="13.4" r="1.4" fill="#e0e0e0"/></g><g transform="translate(1430 7)"><path d="M8 2.4L2.4 13M8 2.4L13.6 13M4 10.6H12" fill="none" stroke="#e8e8e8" stroke-width="2.2"/><circle cx="8" cy="2.4" r="1.8" fill="#e8e8e8"/><circle cx="2.4" cy="13" r="1.8" fill="#e8e8e8"/><circle cx="13.6" cy="13" r="1.8" fill="#e8e8e8"/></g><g transform="translate(1446 7)"><path d="M5 6.6H11L8 9.8Z" fill="#e0e0e0"/></g><g transform="translate(1476 7)"><circle cx="8" cy="8" r="8" fill="#e0e0e0"/><text x="8" y="12.6" text-anchor="middle" font-family="Liberation Sans, sans-serif" font-weight="bold" font-size="12.5" fill="#8c8c8c">?</text></g><g transform="translate(1493 7)"><path d="M5 6.6H11L8 9.8Z" fill="#e0e0e0"/></g><g transform="translate(286 1316)"><path d="M2.6 3L11.4 12M11.4 3L2.6 12" fill="none" stroke="#d8d8d8" stroke-width="1.7"/></g><g transform="translate(310 1316)"><path d="M1.8 14.4L9.4 6.8" fill="none" stroke="#d8d8d8" stroke-width="2.6"/><path d="M14 0.8C11 0 8 2.6 8.8 6L10.2 7.4C13.6 8.2 16.2 5.4 15.4 2.2L13 4.6L11.4 3.2Z" fill="#d8d8d8"/></g><g transform="translate(335 1317)"><path d="M0.5 2.5H15.5V13.5H0.5Z" fill="none" stroke="#4a4a4a" stroke-width="1.2"/><path d="M0.5 4H15.5" fill="none" stroke="#4a4a4a" stroke-width="2"/><path d="M2.6 7L5 9L2.6 11M6 11.5H9.6" fill="none" stroke="#4a4a4a" stroke-width="1.1"/><path d="M18 6.6H24.4L21.2 10Z" fill="#4a4a4a"/></g><path d="M280 1317h1v1h-1zM280 1319h1v1h-1zM280 1321h1v1h-1zM280 1323h1v1h-1zM280 1325h1v1h-1zM280 1327h1v1h-1zM280 1329h1v1h-1zM280 1331h1v1h-1zM282 1317h1v1h-1zM282 1319h1v1h-1zM282 1321h1v1h-1zM282 1323h1v1h-1zM282 1325h1v1h-1zM282 1327h1v1h-1zM282 1329h1v1h-1zM282 1331h1v1h-1zM284 1317h1v1h-1zM284 1319h1v1h-1zM284 1321h1v1h-1zM284 1323h1v1h-1zM284 1325h1v1h-1zM284 1327h1v1h-1zM284 1329h1v1h-1zM284 1331h1v1h-1z" fill="#dcdcdc"/><path d="M9.6 22.6L15.6 7H19.6L23.6 22.6H20.2L19.2 18.4L13.6 20L12.8 22.6ZM14.6 16.6L18.4 15.4L17.2 10Z" fill="#dc2a2e"/><path d="M9.6 22.6L11 19.2L13 19.4L12.8 22.6ZM20.2 22.6L19.6 19.8L22.4 19.6L23.6 22.6Z" fill="#f08a8c"/><path d="M29.6 13H36.4L33 17Z" fill="#f0f0f0"/><path d="M1067 10L1071 14L1067 18Z" fill="#e0e0e0"/><path d="M1466.5 5V25" fill="none" stroke="#4a5262" stroke-width="1"/><path d="M1573 20.5H1584M1598.5 9.5H1609.5V19.5H1598.5ZM1623 9L1634 20M1634 9L1623 20" fill="none" stroke="#f0f0f0" stroke-width="1.5"/><path d="M1592 44.5H1602M1609.5 36.5H1616.5V42.5H1609.5ZM1611.5 36V33.5H1619.5V40.5H1617M1626 33L1637 44M1637 33L1626 44" fill="none" stroke="#f0f0f0" stroke-width="1.4"/></svg>
</body></html>
